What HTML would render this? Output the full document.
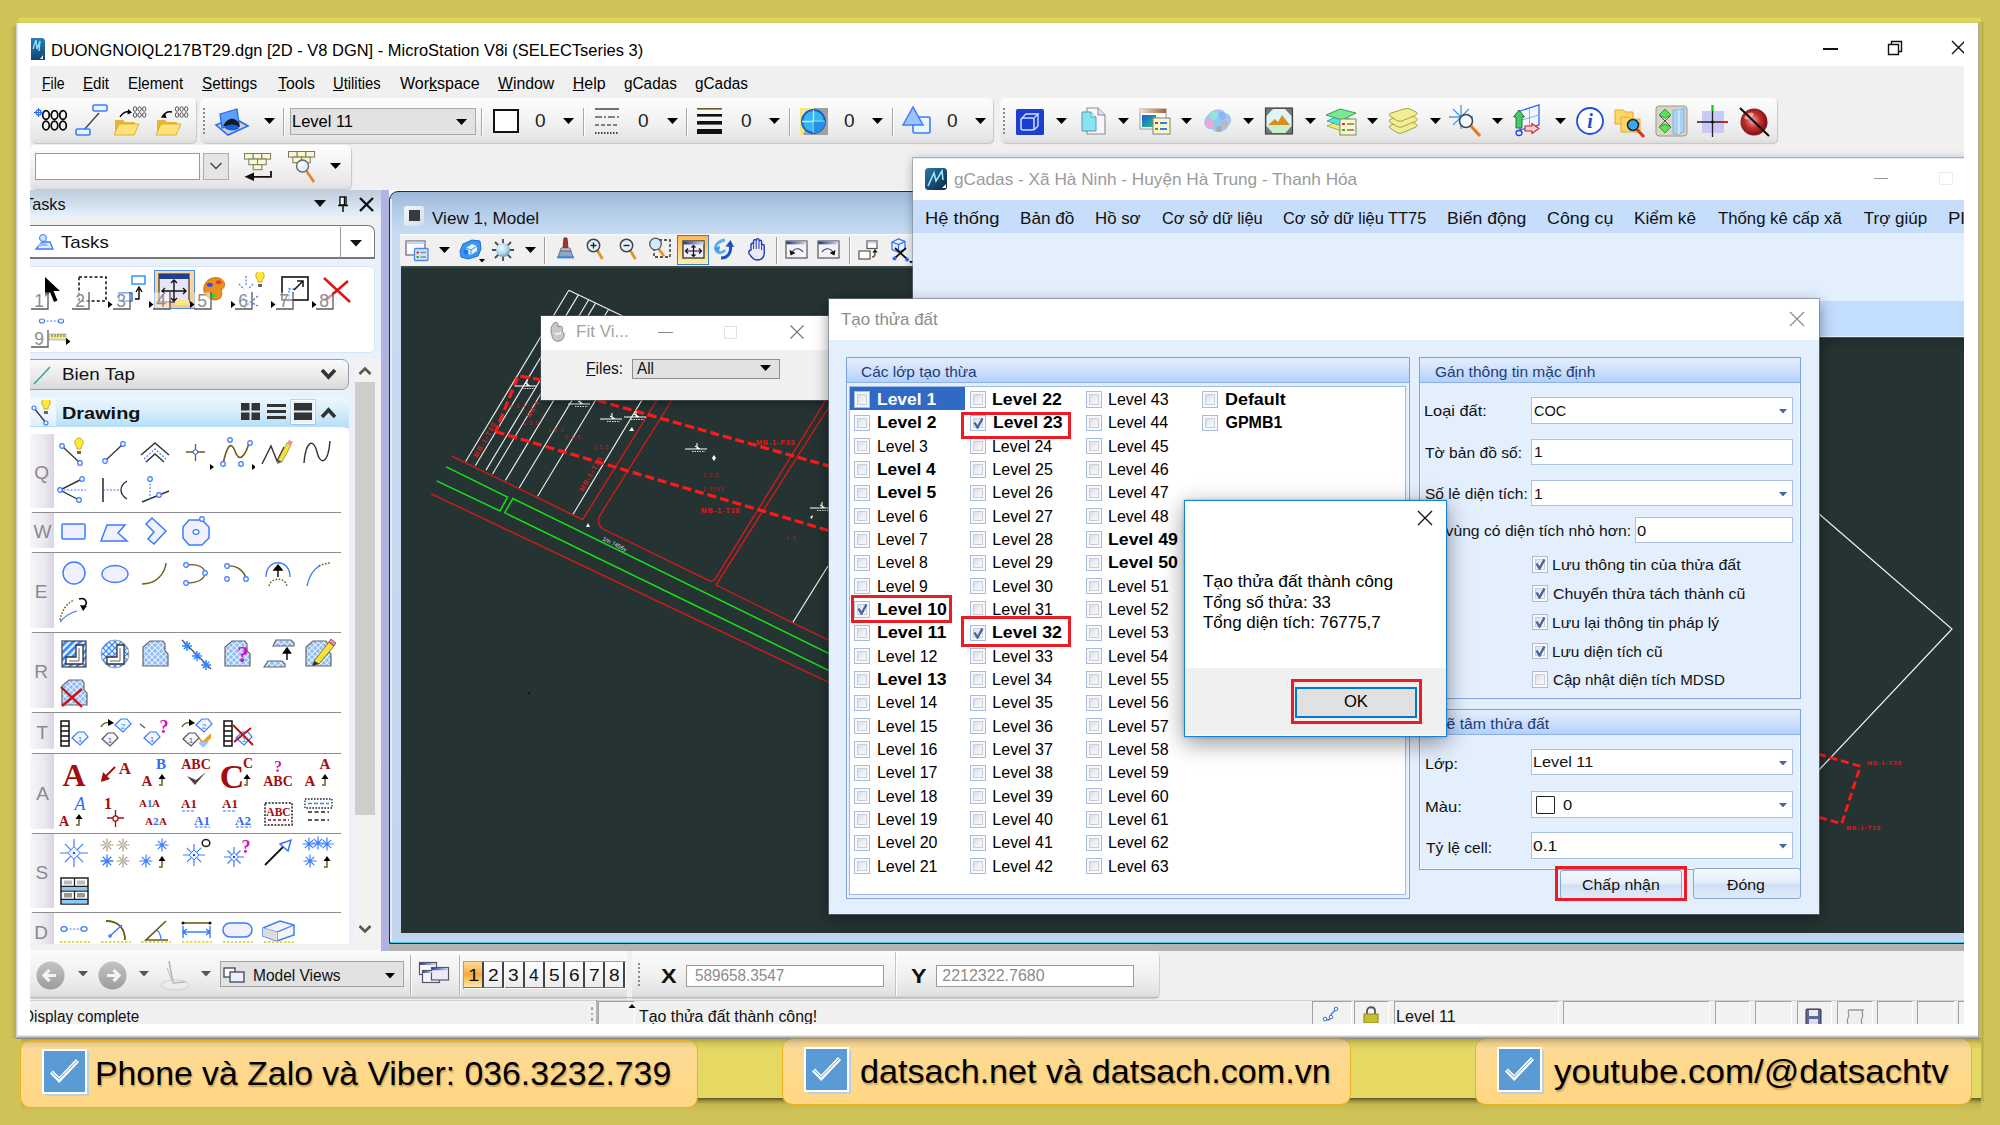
<!DOCTYPE html>
<html><head><meta charset="utf-8"><title>MicroStation</title>
<style>
html,body{margin:0;padding:0;}
body{width:2000px;height:1125px;position:relative;overflow:hidden;background:#cfc257;font-family:"Liberation Sans",sans-serif;}
div,span.t,svg{position:absolute;box-sizing:border-box;}
span.t{white-space:nowrap;transform-origin:0 50%;}
u{text-decoration:underline;}
</style></head><body>
<div style="left:19px;top:16.5px;width:1962px;height:7px;background:linear-gradient(#d2c75a,#e1d762 30%,#dbd05c 70%,#d5ca58);"></div>
<div style="left:1978px;top:22px;width:5.5px;height:1080px;background:linear-gradient(90deg,#c9be54,#c4b950 60%,#b4a94a 80%,#c8bd54);"></div>
<div style="left:8px;top:26px;width:9px;height:1013px;background:linear-gradient(90deg,#cfc55a,#c6bb52 50%,#b3a84a);"></div>
<div style="left:21px;top:1038px;width:1960px;height:60.5px;background:linear-gradient(#a1963f 0px,#b5aa4a 2px,#d4c859 6px,#e5d963 12px,#e5d963 100%);"></div>
<div style="left:21px;top:1098px;width:1960px;height:14px;background:linear-gradient(#5f5728 0px,#9d913c 3px,#c0b54f 6px,#cabe55 10px,#cfc257 14px);"></div>
<div style="left:16.25px;top:22.75px;width:1962.25px;height:1015.75px;background:#fff;"></div>
<div style="left:16.25px;top:1035px;width:1962.25px;height:3.5px;background:linear-gradient(#fdfdfd,#bcbcbc 45%,#7e7e7c);"></div>
<div style="left:16.25px;top:22.75px;width:1.5px;height:1014px;background:linear-gradient(90deg,#c4c4cc,#f4f4f6);"></div>
<div style="left:1977.8px;top:22.75px;width:1.2px;height:1015px;background:linear-gradient(90deg,#c8c8cc,#8f8850);"></div>
<div style="left:30px;top:33px;width:1934px;height:991px;overflow:hidden;background:#fff"><div style="left:-30px;top:-33px;width:2000px;height:1125px">
<svg style="left:30px;top:37px;" width="16" height="24" viewBox="0 0 16 24"><defs><linearGradient id="ai" x1="0" y1="0" x2="0" y2="1"><stop offset="0" stop-color="#2d7fae"/><stop offset="1" stop-color="#0d4470"/></linearGradient></defs><path d="M1 1H13L15 3V23H1Z" fill="url(#ai)"/><path d="M3 12L6 3L7 12L10 4L9 14" stroke="#8fe0ff" stroke-width="1.4" fill="none"/><path d="M10 22L13 18V22Z" fill="#e8f4ff"/></svg>
<span class="t" style="left:50.79px;top:38.5px;font-size:17px;line-height:23px;color:#000;transform:scaleX(0.9688);">DUONGNOIQL217BT29.dgn [2D - V8 DGN] - MicroStation V8i (SELECTseries 3)</span>
<div style="left:1823px;top:48px;width:15px;height:1.5px;background:#111;"></div>
<svg style="left:1887px;top:40px;" width="16" height="16" viewBox="0 0 16 16"><path d="M1.5 4.5H11.5V14.5H1.5Z M4.5 4.5V1.5H14.5V11.5H11.5" fill="none" stroke="#111" stroke-width="1.4"/></svg>
<svg style="left:1950px;top:40px;" width="14" height="16" viewBox="0 0 14 16"><path d="M2 1L15 14M2 14L15 1" stroke="#111" stroke-width="1.4" fill="none"/></svg>
<div style="left:30px;top:66px;width:1934px;height:124px;background:#f0f0f0;"></div>
<span class="t" style="left:41.91px;top:73.0px;font-size:16px;line-height:22px;color:#000;transform:scaleX(0.8750);"><u>F</u>ile</span>
<span class="t" style="left:82.82px;top:73.0px;font-size:16px;line-height:22px;color:#000;transform:scaleX(0.9434);"><u>E</u>dit</span>
<span class="t" style="left:127.83px;top:73.0px;font-size:16px;line-height:22px;color:#000;transform:scaleX(0.9391);">E<u>l</u>ement</span>
<span class="t" style="left:202.28px;top:73.0px;font-size:16px;line-height:22px;color:#000;transform:scaleX(0.9558);"><u>S</u>ettings</span>
<span class="t" style="left:277.75px;top:73.0px;font-size:16px;line-height:22px;color:#000;transform:scaleX(0.9863);"><u>T</u>ools</span>
<span class="t" style="left:332.84px;top:73.0px;font-size:16px;line-height:22px;color:#000;transform:scaleX(0.9246);"><u>U</u>tilities</span>
<span class="t" style="left:400.00px;top:73.0px;font-size:16px;line-height:22px;color:#000;transform:scaleX(1.0000);">Wor<u>k</u>space</span>
<span class="t" style="left:498.00px;top:73.0px;font-size:16px;line-height:22px;color:#000;transform:scaleX(0.9868);"><u>W</u>indow</span>
<span class="t" style="left:572.75px;top:73.0px;font-size:16px;line-height:22px;color:#000;transform:scaleX(1.0000);"><u>H</u>elp</span>
<span class="t" style="left:623.52px;top:73.0px;font-size:16px;line-height:22px;color:#000;transform:scaleX(0.9585);">gCadas</span>
<span class="t" style="left:694.52px;top:73.0px;font-size:16px;line-height:22px;color:#000;transform:scaleX(0.9585);">gCadas</span>
<div style="left:30px;top:98px;width:166px;height:45px;background:linear-gradient(#fdfdfd,#f4f4f4 45%,#e6e6e6 90%,#dcdcdc);border-radius:5px;box-shadow:1px 1px 1px rgba(0,0,0,.18);"></div>
<div style="left:200px;top:98px;width:793px;height:45px;background:linear-gradient(#fdfdfd,#f4f4f4 45%,#e6e6e6 90%,#dcdcdc);border-radius:5px;box-shadow:1px 1px 1px rgba(0,0,0,.18);"></div>
<div style="left:1000px;top:98px;width:777px;height:45px;background:linear-gradient(#fdfdfd,#f4f4f4 45%,#e6e6e6 90%,#dcdcdc);border-radius:5px;box-shadow:1px 1px 1px rgba(0,0,0,.18);"></div>
<svg style="left:34px;top:108px;" width="36" height="26" viewBox="0 0 36 26"><ellipse cx="12.0" cy="7.0" rx="3.3" ry="4.4" fill="none" stroke="#000" stroke-width="1.7"/><ellipse cx="20.5" cy="7.0" rx="3.3" ry="4.4" fill="none" stroke="#000" stroke-width="1.7"/><ellipse cx="29.0" cy="7.0" rx="3.3" ry="4.4" fill="none" stroke="#000" stroke-width="1.7"/><ellipse cx="12.0" cy="17.5" rx="3.3" ry="4.4" fill="none" stroke="#000" stroke-width="1.7"/><ellipse cx="20.5" cy="17.5" rx="3.3" ry="4.4" fill="none" stroke="#000" stroke-width="1.7"/><ellipse cx="29.0" cy="17.5" rx="3.3" ry="4.4" fill="none" stroke="#000" stroke-width="1.7"/><circle cx="4.5" cy="4.5" r="2.6" fill="#fff" stroke="#2a6cf0" stroke-width="1.3"/><path d="M4.5 0V9M0 4.500H9" stroke="#2a6cf0" stroke-width="1.1"/></svg>
<svg style="left:74px;top:103px;" width="36" height="34" viewBox="0 0 36 34"><path d="M9 28L25 10" stroke="#444" stroke-width="1.4"/><rect x="19" y="2" width="14" height="6" rx="1.5" fill="#eaf2ff" stroke="#3b7cff" stroke-width="1.6"/><rect x="2" y="26" width="14" height="6" rx="1.5" fill="#eaf2ff" stroke="#3b7cff" stroke-width="1.6"/></svg>
<svg style="left:112px;top:105px;" width="40" height="32" viewBox="0 0 40 32"><path d="M3 30V15H11L13 17H23V30Z" fill="#e8b73a"/><path d="M2 30L7 19H27L22 30Z" fill="#ffe27a" stroke="#d9a521" stroke-width="0.8"/><path d="M8 12C11 7 14 6 18 7" stroke="#000" stroke-width="1.4" fill="none"/><path d="M16 4L20 7.5L15.5 9.5Z" fill="#000"/><ellipse cx="23.0" cy="4" rx="1.7" ry="2.3" fill="none" stroke="#444" stroke-width="0.9"/><ellipse cx="27.6" cy="4" rx="1.7" ry="2.3" fill="none" stroke="#444" stroke-width="0.9"/><ellipse cx="32.2" cy="4" rx="1.7" ry="2.3" fill="none" stroke="#444" stroke-width="0.9"/><ellipse cx="23.0" cy="10" rx="1.7" ry="2.3" fill="none" stroke="#444" stroke-width="0.9"/><ellipse cx="27.6" cy="10" rx="1.7" ry="2.3" fill="none" stroke="#444" stroke-width="0.9"/><ellipse cx="32.2" cy="10" rx="1.7" ry="2.3" fill="none" stroke="#444" stroke-width="0.9"/></svg>
<svg style="left:154px;top:105px;" width="40" height="32" viewBox="0 0 40 32"><path d="M3 30V15H11L13 17H23V30Z" fill="#e8b73a"/><path d="M2 30L7 19H27L22 30Z" fill="#ffe27a" stroke="#d9a521" stroke-width="0.8"/><path d="M8 12C11 7 14 6 18 7" stroke="#000" stroke-width="1.4" fill="none"/><path d="M11 8L7 12.5L12.5 13Z" fill="#000"/><ellipse cx="23.0" cy="4" rx="1.7" ry="2.3" fill="none" stroke="#444" stroke-width="0.9"/><ellipse cx="27.6" cy="4" rx="1.7" ry="2.3" fill="none" stroke="#444" stroke-width="0.9"/><ellipse cx="32.2" cy="4" rx="1.7" ry="2.3" fill="none" stroke="#444" stroke-width="0.9"/><ellipse cx="23.0" cy="10" rx="1.7" ry="2.3" fill="none" stroke="#444" stroke-width="0.9"/><ellipse cx="27.6" cy="10" rx="1.7" ry="2.3" fill="none" stroke="#444" stroke-width="0.9"/><ellipse cx="32.2" cy="10" rx="1.7" ry="2.3" fill="none" stroke="#444" stroke-width="0.9"/></svg>
<div style="left:203px;top:108px;width:2px;height:2px;background:#8a8a8a;"></div>
<div style="left:203px;top:112px;width:2px;height:2px;background:#8a8a8a;"></div>
<div style="left:203px;top:116px;width:2px;height:2px;background:#8a8a8a;"></div>
<div style="left:203px;top:120px;width:2px;height:2px;background:#8a8a8a;"></div>
<div style="left:203px;top:124px;width:2px;height:2px;background:#8a8a8a;"></div>
<div style="left:203px;top:128px;width:2px;height:2px;background:#8a8a8a;"></div>
<div style="left:203px;top:132px;width:2px;height:2px;background:#8a8a8a;"></div>
<svg style="left:214px;top:106px;" width="36" height="32" viewBox="0 0 36 32"><path d="M2 19L20 12L34 20L14 29Z" fill="#d0d0d0" stroke="#2a6cf0" stroke-width="1.6"/><path d="M6 8L23 3L25 18L8 22Z" fill="#5aa0ff" stroke="#2a6cf0" stroke-width="1.3"/><path d="M9 20C13 12 20 10 25 17L26 21Z" fill="#1a1a1a"/><ellipse cx="18" cy="21.5" rx="7" ry="3" fill="#1160e8"/></svg>
<svg style="left:263.5px;top:118.0px;" width="11" height="6" viewBox="0 0 11 6"><path d="M0 0H11L5.5 6Z" fill="#000"/></svg>
<div style="left:283px;top:108px;width:1px;height:28px;background:#a8a8a8;"></div>
<div style="left:284px;top:108px;width:1px;height:28px;background:#fff;"></div>
<div style="left:290px;top:108px;width:186px;height:27px;background:#e2e2e2;border:1px solid #a9a9a9;"></div>
<span class="t" style="left:291.79px;top:110.0px;font-size:17px;line-height:23px;color:#000;transform:scaleX(0.9672);">Level 11</span>
<svg style="left:455.5px;top:119.0px;" width="11" height="6" viewBox="0 0 11 6"><path d="M0 0H11L5.5 6Z" fill="#000"/></svg>
<div style="left:481px;top:108px;width:1px;height:28px;background:#a8a8a8;"></div>
<div style="left:482px;top:108px;width:1px;height:28px;background:#fff;"></div>
<div style="left:493px;top:109px;width:26px;height:24px;background:#fff;border:2px solid #111;"></div>
<span class="t" style="left:534.71px;top:109.0px;font-size:18px;line-height:24px;color:#222;transform:scaleX(1.0588);">0</span>
<span class="t" style="left:637.71px;top:109.0px;font-size:18px;line-height:24px;color:#222;transform:scaleX(1.0588);">0</span>
<span class="t" style="left:740.71px;top:109.0px;font-size:18px;line-height:24px;color:#222;transform:scaleX(1.0588);">0</span>
<span class="t" style="left:843.71px;top:109.0px;font-size:18px;line-height:24px;color:#222;transform:scaleX(1.0588);">0</span>
<span class="t" style="left:946.71px;top:109.0px;font-size:18px;line-height:24px;color:#222;transform:scaleX(1.0588);">0</span>
<svg style="left:562.5px;top:118.0px;" width="11" height="6" viewBox="0 0 11 6"><path d="M0 0H11L5.5 6Z" fill="#000"/></svg>
<svg style="left:666.5px;top:118.0px;" width="11" height="6" viewBox="0 0 11 6"><path d="M0 0H11L5.5 6Z" fill="#000"/></svg>
<svg style="left:768.5px;top:118.0px;" width="11" height="6" viewBox="0 0 11 6"><path d="M0 0H11L5.5 6Z" fill="#000"/></svg>
<svg style="left:871.5px;top:118.0px;" width="11" height="6" viewBox="0 0 11 6"><path d="M0 0H11L5.5 6Z" fill="#000"/></svg>
<svg style="left:974.5px;top:118.0px;" width="11" height="6" viewBox="0 0 11 6"><path d="M0 0H11L5.5 6Z" fill="#000"/></svg>
<div style="left:583px;top:108px;width:1px;height:28px;background:#a8a8a8;"></div>
<div style="left:584px;top:108px;width:1px;height:28px;background:#fff;"></div>
<div style="left:686px;top:108px;width:1px;height:28px;background:#a8a8a8;"></div>
<div style="left:687px;top:108px;width:1px;height:28px;background:#fff;"></div>
<div style="left:789px;top:108px;width:1px;height:28px;background:#a8a8a8;"></div>
<div style="left:790px;top:108px;width:1px;height:28px;background:#fff;"></div>
<div style="left:892px;top:108px;width:1px;height:28px;background:#a8a8a8;"></div>
<div style="left:893px;top:108px;width:1px;height:28px;background:#fff;"></div>
<svg style="left:593px;top:106px;" width="28" height="30" viewBox="0 0 28 30"><path d="M2 3H26" stroke="#111" stroke-width="1.2"/><path d="M2 11H26" stroke="#111" stroke-width="1.2" stroke-dasharray="7 2 2 2"/><path d="M2 19H26" stroke="#111" stroke-width="1.2" stroke-dasharray="4 2"/><path d="M2 27H26" stroke="#111" stroke-width="1.4" stroke-dasharray="1.5 1.5"/></svg>
<svg style="left:696px;top:106px;" width="28" height="30" viewBox="0 0 28 30"><rect x="1" y="2" width="25" height="1.6" fill="#6b5a2a"/><rect x="1" y="8" width="25" height="2.6" fill="#111"/><rect x="1" y="15" width="25" height="3.6" fill="#111"/><rect x="1" y="23" width="25" height="5" fill="#111"/></svg>
<svg style="left:799px;top:106px;" width="30" height="30" viewBox="0 0 30 30"><rect x="1" y="2" width="28" height="27" fill="#f0e68c"/><path d="M15 2H29V29H4Z" fill="#8a8fa0" opacity=".8"/><circle cx="14.5" cy="15.5" r="11.5" fill="#38b6f0" stroke="#1a5cd8" stroke-width="2"/><path d="M14.5 4V27M3 15.5H26" stroke="#bfeaff" stroke-width="1.3"/><path d="M14.5 15.5H26A11.5 11.5 0 0 1 14.5 27Z" fill="#2a8fe0"/></svg>
<svg style="left:901px;top:105px;" width="32" height="32" viewBox="0 0 32 32"><rect x="12" y="12" width="17" height="16" rx="1.5" fill="#eef4ff" stroke="#3b7cff" stroke-width="1.6"/><path d="M2 20L12 2L22 20Z" fill="#9cc4ff" stroke="#3b7cff" stroke-width="1.5"/></svg>
<div style="left:1003px;top:108px;width:2px;height:2px;background:#8a8a8a;"></div>
<div style="left:1003px;top:112px;width:2px;height:2px;background:#8a8a8a;"></div>
<div style="left:1003px;top:116px;width:2px;height:2px;background:#8a8a8a;"></div>
<div style="left:1003px;top:120px;width:2px;height:2px;background:#8a8a8a;"></div>
<div style="left:1003px;top:124px;width:2px;height:2px;background:#8a8a8a;"></div>
<div style="left:1003px;top:128px;width:2px;height:2px;background:#8a8a8a;"></div>
<div style="left:1003px;top:132px;width:2px;height:2px;background:#8a8a8a;"></div>
<svg style="left:1055.5px;top:118.0px;" width="11" height="6" viewBox="0 0 11 6"><path d="M0 0H11L5.5 6Z" fill="#000"/></svg>
<svg style="left:1118.0px;top:118.0px;" width="11" height="6" viewBox="0 0 11 6"><path d="M0 0H11L5.5 6Z" fill="#000"/></svg>
<svg style="left:1180.5px;top:118.0px;" width="11" height="6" viewBox="0 0 11 6"><path d="M0 0H11L5.5 6Z" fill="#000"/></svg>
<svg style="left:1242.5px;top:118.0px;" width="11" height="6" viewBox="0 0 11 6"><path d="M0 0H11L5.5 6Z" fill="#000"/></svg>
<svg style="left:1304.5px;top:118.0px;" width="11" height="6" viewBox="0 0 11 6"><path d="M0 0H11L5.5 6Z" fill="#000"/></svg>
<svg style="left:1366.5px;top:118.0px;" width="11" height="6" viewBox="0 0 11 6"><path d="M0 0H11L5.5 6Z" fill="#000"/></svg>
<svg style="left:1429.5px;top:118.0px;" width="11" height="6" viewBox="0 0 11 6"><path d="M0 0H11L5.5 6Z" fill="#000"/></svg>
<svg style="left:1491.5px;top:118.0px;" width="11" height="6" viewBox="0 0 11 6"><path d="M0 0H11L5.5 6Z" fill="#000"/></svg>
<svg style="left:1554.5px;top:118.0px;" width="11" height="6" viewBox="0 0 11 6"><path d="M0 0H11L5.5 6Z" fill="#000"/></svg>
<svg style="left:1016px;top:108.5px;" width="28" height="26" viewBox="0 0 28 26"><rect x="0" y="0" width="28" height="26" rx="1.500" fill="#1b3fd2"/><rect x="5" y="9" width="13" height="12" rx="2" fill="none" stroke="#cfe0ff" stroke-width="1.500"/><path d="M6 9L10 5H22L18 9M22 5V17L18 21" fill="none" stroke="#cfe0ff" stroke-width="1.400"/></svg>
<svg style="left:1078px;top:106px;" width="30" height="30" viewBox="0 0 30 30"><path d="M9 2H20L27 9V28H9Z" fill="#f8f6fc" stroke="#8a8a96" stroke-width="1.100"/><path d="M20 2V9H27" fill="#e4e0ec" stroke="#8a8a96" stroke-width="1"/><path d="M4 6H13L18 11V25H4Z" fill="#86e4f2" stroke="#5a9aa8" stroke-width="1"/><path d="M13 6V11H18" fill="#c8f4fa" stroke="#5a9aa8" stroke-width=".800"/></svg>
<svg style="left:1138px;top:107px;" width="34" height="30" viewBox="0 0 34 30"><defs><linearGradient id="wb" x1="0" y1="0" x2="1" y2="0"><stop offset="0" stop-color="#f0e0d0"/><stop offset="1" stop-color="#a8622a"/></linearGradient><linearGradient id="wc" x1="0" y1="0" x2="1" y2="1"><stop offset="0" stop-color="#1a58e8"/><stop offset="1" stop-color="#28c878"/></linearGradient></defs><rect x="2" y="2" width="26" height="20" fill="#fff" stroke="#999" stroke-width="1"/><rect x="2" y="2" width="26" height="4" fill="url(#wb)"/><rect x="4" y="8" width="14" height="12" fill="url(#wc)"/><rect x="15" y="11" width="17" height="16" fill="#fbf6c8" stroke="#8a8a80" stroke-width="1.100"/><path d="M17 16H20" stroke="#e03030" stroke-width="2"/><path d="M17 22H20" stroke="#30b030" stroke-width="2"/><path d="M22 16H29M22 22H29" stroke="#3a7af0" stroke-width="2"/></svg>
<svg style="left:1201px;top:107px;" width="32" height="28" viewBox="0 0 32 28"><path d="M8 7C12 1 22 1 24 6C31 7 32 16 27 19C26 25 14 27 11 22C3 23 0 13 8 7Z" fill="#a8c4ee"/><circle cx="9" cy="17" r="4" fill="#f0a8d0"/><circle cx="14" cy="9" r="4.500" fill="#90e8d8"/><circle cx="21" cy="9" r="4" fill="#88b8f8"/><circle cx="17" cy="16" r="4.500" fill="#90c8f8"/><circle cx="24" cy="17" r="3.500" fill="#b8b8c0"/><circle cx="18" cy="22" r="3" fill="#a8a8b8"/></svg>
<svg style="left:1264px;top:106px;" width="30" height="30" viewBox="0 0 30 30"><rect x="1.500" y="2" width="27" height="26" fill="#777" stroke="#444" stroke-width="1.200"/><path d="M9 3H21L27.500 10V20L21 27H9L2.500 20V10Z" fill="#dff6f8"/><path d="M4 19L11 13L14 16L18 9L26 19Z" fill="#d89018"/><path d="M2.500 19H27.500V20L21 27H9L2.500 20Z" fill="#c8f0c8"/></svg>
<svg style="left:1324px;top:106px;" width="34" height="32" viewBox="0 0 34 32"><path d="M3 20L14 15L30 19L18 25Z" fill="#f0e870" stroke="#a89a30" stroke-width=".800"/><path d="M3 15L14 10L30 14L18 20Z" fill="#58e0e8" stroke="#2a9aa8" stroke-width=".800"/><path d="M2 9L16 3L32 7L18 14Z" fill="#7ae890" stroke="#2a9a48" stroke-width=".900"/><rect x="16" y="13" width="16" height="16" fill="#fbf6c8" stroke="#8a8a80" stroke-width="1.100"/><path d="M18 18H21" stroke="#e03030" stroke-width="2"/><path d="M18 24H21" stroke="#30b030" stroke-width="2"/><path d="M23 18H30M23 24H30" stroke="#777" stroke-width="1.600"/></svg>
<svg style="left:1386px;top:106px;" width="34" height="32" viewBox="0 0 34 32"><g fill="#f2ee96" stroke="#a8a040" stroke-width="1"><path d="M4 22Q2 20 5 19L18 15Q21 14 24 15L30 18Q33 19 30 21L16 27Q13 28 10 26Z"/><path d="M4 16Q2 14 5 13L18 9Q21 8 24 9L30 12Q33 13 30 15L16 21Q13 22 10 20Z"/><path d="M4 10Q2 8 5 7L18 3Q21 2 24 3L30 6Q33 7 30 9L16 15Q13 16 10 14Z"/></g></svg>
<svg style="left:1449px;top:104px;" width="34" height="34" viewBox="0 0 34 34"><path d="M12 1V25M0 13H24M4 5L20 21M20 5L4 21" stroke="#4a9cf0" stroke-width="1.3"/><circle cx="17" cy="17" r="6.5" fill="#f3fbff" stroke="#444" stroke-width="1.6"/><path d="M22 22L31 32" stroke="#e07a1a" stroke-width="3"/></svg>
<svg style="left:1511px;top:102px;" width="34" height="36" viewBox="0 0 34 36"><path d="M9 9L28 3V23L9 28Z" fill="#f4f6ff" stroke="#2a6cf0" stroke-width="1.300"/><path d="M9 18.500L28 13M18.500 6V25.500" stroke="#9ab" stroke-width="1"/><path d="M5 26V15H2.500L8 8L13.500 15H11V26Z" fill="#48c868" stroke="#187838" stroke-width="1"/><path d="M14 24H21V21.500L28 26.500L21 31.500V29H14Z" fill="#f8d0d0" stroke="#c02020" stroke-width="1.100"/><ellipse cx="8" cy="31" rx="3" ry="2.500" fill="#e8eeff" stroke="#2a3cf0" stroke-width="1.300"/></svg>
<svg style="left:1575px;top:106px;" width="30" height="30" viewBox="0 0 30 30"><circle cx="15" cy="15" r="13" fill="#fff" stroke="#1a4fd8" stroke-width="1.8"/><text x="15" y="22" font-family="Liberation Serif" font-style="italic" font-weight="bold" font-size="20" fill="#1a4fd8" text-anchor="middle">i</text></svg>
<svg style="left:1613px;top:105px;" width="34" height="34" viewBox="0 0 34 34"><path d="M2 5H10L12 7H20V19H2Z" fill="#fdd56a" stroke="#eaa820" stroke-width="1"/><path d="M8 12H16L18 14H27V27H8Z" fill="#fdd56a" stroke="#eaa820" stroke-width="1"/><circle cx="20" cy="20" r="5.500" fill="#38a8f4" stroke="#222" stroke-width="1.500"/><path d="M24 24.500L31 32" stroke="#e03018" stroke-width="3"/></svg>
<svg style="left:1655px;top:105px;" width="34" height="32" viewBox="0 0 34 32"><rect x="1" y="1" width="31" height="30" rx="3" fill="#d8d4c8" stroke="#9a988c" stroke-width="1"/><path d="M18 5H24L29 3V27L24 29H18Z" fill="#a8d0f8" stroke="#78a8e0" stroke-width=".800"/><path d="M24 5V29" stroke="#d8ecff" stroke-width="1.500"/><path d="M4 10L10 4L16 10L10 13Z M4 22L10 19L16 22L10 28Z" fill="#58e058" stroke="#1d8a1d" stroke-width=".800"/><path d="M5 11L15 21M15 11L5 21" stroke="#555" stroke-width="1"/></svg>
<svg style="left:1697px;top:104px;" width="32" height="34" viewBox="0 0 32 34"><rect x="5" y="7" width="22" height="22" fill="#c9c9f6"/><path d="M15.500 1V33M0 18H31" stroke="#222" stroke-width="1.300"/><path d="M15.500 1V7" stroke="#1ac01a" stroke-width="2"/><path d="M24 18H31" stroke="#e02020" stroke-width="2"/><rect x="5" y="7" width="22" height="22" fill="#c9c9f6" opacity=".0"/><circle cx="15.500" cy="18" r="1.600" fill="#111"/></svg>
<svg style="left:1737px;top:105px;" width="34" height="34" viewBox="0 0 34 34"><defs><radialGradient id="rb" cx=".45" cy=".45" r=".6"><stop offset="0" stop-color="#f0b0b0"/><stop offset=".45" stop-color="#c83030"/><stop offset="1" stop-color="#6a0c0c"/></radialGradient></defs><circle cx="17" cy="17" r="13.500" fill="url(#rb)"/><ellipse cx="12" cy="11" rx="5" ry="3" fill="#fff" opacity=".55" transform="rotate(-30 12 11)"/><path d="M3 3L32 31" stroke="#111" stroke-width="2.200"/></svg>
<div style="left:30px;top:145px;width:321px;height:44px;background:linear-gradient(#fdfdfd,#f4f4f4 45%,#e6e6e6 90%,#dcdcdc);border-radius:5px;box-shadow:1px 1px 1px rgba(0,0,0,.18);"></div>
<div style="left:35px;top:153px;width:165px;height:27px;background:#fff;border:1px solid #9a9a9a;"></div>
<div style="left:203px;top:153px;width:26px;height:27px;background:#e4e4e4;border:1px solid #adadad;"></div>
<svg style="left:209px;top:161px;" width="14" height="10" viewBox="0 0 14 10"><path d="M1.5 2L7 7.5L12.5 2" fill="none" stroke="#444" stroke-width="1.4"/></svg>
<svg style="left:244px;top:153px;" width="32" height="30" viewBox="0 0 32 30"><g fill="#fbf8cc" stroke="#77776c" stroke-width="1"><rect x="0.500" y="0.500" width="8.700" height="5.600"/><rect x="9.200" y="0.500" width="8.700" height="5.600"/><rect x="17.900" y="0.500" width="8.700" height="5.600"/><rect x="4.800" y="6.100" width="8.700" height="5.600"/><rect x="13.500" y="6.100" width="8.700" height="5.600"/><rect x="9.200" y="11.700" width="8.700" height="5.000"/></g><path d="M27 18V23.800H8" fill="none" stroke="#111" stroke-width="1.800"/><path d="M0.500 23.800L10 19.500V28Z" fill="#111"/></svg>
<svg style="left:288px;top:150.5px;" width="32" height="34" viewBox="0 0 32 34"><g fill="#fbf8cc" stroke="#77776c" stroke-width="1"><rect x="0.500" y="0.500" width="8.700" height="5.600"/><rect x="9.200" y="0.500" width="8.700" height="5.600"/><rect x="17.900" y="0.500" width="8.700" height="5.600"/><rect x="4.800" y="6.100" width="8.700" height="5.600"/><rect x="13.500" y="6.100" width="8.700" height="5.600"/><rect x="9.200" y="11.700" width="8.700" height="5.000"/></g><path d="M18.500 20L26 31" stroke="#e8842a" stroke-width="2.800"/><circle cx="14.500" cy="15" r="6" fill="#e4f2ff" stroke="#666" stroke-width="1.300"/><ellipse cx="13" cy="13" rx="3" ry="2" fill="#fff" opacity=".8"/></svg>
<svg style="left:329.5px;top:163.0px;" width="11" height="6" viewBox="0 0 11 6"><path d="M0 0H11L5.5 6Z" fill="#000"/></svg>
<div style="left:30px;top:190px;width:350.5px;height:28px;background:linear-gradient(#c0cddb,#cbd9e8 35%,#dbe8f5 70%,#e7f2fd);"></div>
<div style="left:30px;top:218px;width:350.5px;height:731.5px;background:#e9f2fc;"></div>
<div style="left:30px;top:218px;width:350.5px;height:8px;background:#f0f0f0;"></div>
<span class="t" style="left:23.56px;top:192.5px;font-size:17px;line-height:23px;color:#111;transform:scaleX(0.9591);">Tasks</span>
<svg style="left:314px;top:200px;" width="12" height="8" viewBox="0 0 12 8"><path d="M0 0H12L6 7Z" fill="#111"/></svg>
<svg style="left:337px;top:196px;" width="12" height="17" viewBox="0 0 12 17"><path d="M3 1H9V9H3Z" fill="#fff" stroke="#111" stroke-width="1.4"/><path d="M7.5 1V9M1 9.500H11M6 10V16" stroke="#111" stroke-width="1.5"/></svg>
<svg style="left:358px;top:196px;" width="17" height="17" viewBox="0 0 17 17"><path d="M2 2L15 15M15 2L2 15" stroke="#111" stroke-width="2.4"/></svg>
<div style="left:380.5px;top:190px;width:8.5px;height:760.7px;background:linear-gradient(90deg,#b1b2e1,#afb4e3);"></div>
<div style="left:22px;top:225px;width:353px;height:34px;background:#fff;border:1.5px solid #777;border-radius:7px 7px 0 0;border-bottom:2px solid #777;"></div>
<div style="left:340px;top:227px;width:1px;height:31px;background:#999;"></div>
<svg style="left:350px;top:240px;" width="12" height="7" viewBox="0 0 12 7"><path d="M0 0H12L6 6.500Z" fill="#111"/></svg>
<svg style="left:33px;top:232px;" width="22" height="20" viewBox="0 0 22 20"><path d="M3 17L9 10H17L20 17Z" fill="#dfeaff" stroke="#3b7cff" stroke-width="1.3"/><circle cx="10" cy="6" r="3.500" fill="#cfe0ff" stroke="#3b7cff" stroke-width="1"/><path d="M5 14C6 10 14 10 15 14Z" fill="#9cbcf8"/></svg>
<span class="t" style="left:60.73px;top:230.5px;font-size:17px;line-height:23px;color:#111;transform:scaleX(1.0994);letter-spacing:0;">Tasks</span>
<div style="left:24px;top:266px;width:351px;height:87px;background:#fff;border:1px solid #d5e6f7;border-radius:6px;"></div>
<div style="left:154px;top:270px;width:41px;height:39px;background:linear-gradient(#fbd9a5,#f9c98a);border:1px solid #4a90e8;"></div>
<svg style="left:43px;top:276px;" width="18" height="28" viewBox="0 0 18 28"><path d="M2 1V21L7 16L11 26L14.500 24.500L10.500 15H17Z" fill="#000"/></svg>
<svg style="left:77px;top:275px;" width="32" height="28" viewBox="0 0 32 28"><rect x="2" y="2" width="27" height="24" fill="none" stroke="#111" stroke-width="1.5" stroke-dasharray="3 2.2"/></svg>
<svg style="left:118px;top:274px;" width="34" height="34" viewBox="0 0 34 34"><rect x="14" y="2" width="13" height="8" fill="#fff" stroke="#3b9cff" stroke-width="1.6"/><rect x="1" y="19" width="13" height="8" fill="#fff" stroke="#3b7cff" stroke-width="1.6"/><path d="M17 25H21V15M18 18L21 13L24 18" fill="none" stroke="#000" stroke-width="1.4"/></svg>
<svg style="left:158px;top:273px;" width="36" height="34" viewBox="0 0 36 34"><rect x="1" y="1" width="30" height="28" fill="#e8e4f8" stroke="#333" stroke-width="1.2"/><rect x="1" y="1" width="30" height="5" fill="#1f3f8f"/><rect x="17" y="27" width="14" height="5" fill="#f5e88a"/><path d="M4 18H28M16 7V28M7 15L4 18L7 21M25 15L28 18L25 21M13 10L16 7L19 10M13 25L16 28L19 25" fill="none" stroke="#111" stroke-width="1.4"/></svg>
<svg style="left:201px;top:276px;" width="30" height="34" viewBox="0 0 30 34"><g transform="scale(.88)"><path d="M14 2C25 0 30 10 25 14C21 17 26 20 22 25C17 30 4 26 3 16C3 8 8 3 14 2Z" fill="#e8901a" stroke="#a8600a" stroke-width=".8"/><ellipse cx="10" cy="10" rx="3.500" ry="2.300" fill="#3a4af0"/><ellipse cx="20" cy="7" rx="3" ry="2.300" fill="#f03030"/><ellipse cx="13" cy="22" rx="3.500" ry="2.500" fill="#30d040"/></g></svg>
<svg style="left:236px;top:272px;" width="36" height="38" viewBox="0 0 36 38"><path d="M10 4V14M3 12L8 17M17 12L12 17" stroke="#3b7cff" stroke-width="1.2" stroke-dasharray="2 1.4"/><path d="M6 26L22 34M22 24L8 36" stroke="#3b7cff" stroke-width="1.3" stroke-dasharray="2.4 1.6"/><path d="M20 5a4.2 4.6 0 1 1 8 0c-1 2 -2 3 -2 5h-4c0-2 -1-3 -2-5z" fill="#ffe83a" stroke="#b89a10" stroke-width=".8"/><rect x="22" y="12" width="4" height="3" fill="#666"/></svg>
<svg style="left:279px;top:275px;" width="32" height="30" viewBox="0 0 32 30"><rect x="3" y="2" width="26" height="23" fill="#fff" stroke="#111" stroke-width="1.6"/><path d="M10 25V14H17" fill="none" stroke="#3b7cff" stroke-width="1.4" stroke-dasharray="2 1.6"/><path d="M15 15L24 6M18 6H24V12" fill="none" stroke="#111" stroke-width="1.5"/></svg>
<svg style="left:320px;top:276px;" width="34" height="30" viewBox="0 0 34 30"><path d="M4 2L30 26M28 5L6 24" stroke="#e01010" stroke-width="2.400"/></svg>
<svg style="left:31.0px;top:290.5px;" width="20" height="20" viewBox="0 0 20 20"><rect x="0" y="1.500" width="16.500" height="16.500" fill="#fff" opacity=".5"/><path d="M0 18H17V1" fill="none" stroke="#5a5a5a" stroke-width="1.300"/><text x="8" y="16" font-family="Liberation Sans" font-size="17.500" fill="#8c8c8c" text-anchor="middle">1</text></svg>
<svg style="left:71.75px;top:290.5px;" width="20" height="20" viewBox="0 0 20 20"><rect x="0" y="1.500" width="16.500" height="16.500" fill="#fff" opacity=".5"/><path d="M0 18H17V1" fill="none" stroke="#5a5a5a" stroke-width="1.300"/><text x="8" y="16" font-family="Liberation Sans" font-size="17.500" fill="#8c8c8c" text-anchor="middle">2</text></svg>
<svg style="left:112.5px;top:290.5px;" width="20" height="20" viewBox="0 0 20 20"><rect x="0" y="1.500" width="16.500" height="16.500" fill="#fff" opacity=".5"/><path d="M0 18H17V1" fill="none" stroke="#5a5a5a" stroke-width="1.300"/><text x="8" y="16" font-family="Liberation Sans" font-size="17.500" fill="#8c8c8c" text-anchor="middle">3</text></svg>
<svg style="left:153.25px;top:290.5px;" width="20" height="20" viewBox="0 0 20 20"><rect x="0" y="1.500" width="16.500" height="16.500" fill="#fff" opacity=".5"/><path d="M0 18H17V1" fill="none" stroke="#5a5a5a" stroke-width="1.300"/><text x="8" y="16" font-family="Liberation Sans" font-size="17.500" fill="#8c8c8c" text-anchor="middle">4</text></svg>
<svg style="left:194.0px;top:290.5px;" width="20" height="20" viewBox="0 0 20 20"><rect x="0" y="1.500" width="16.500" height="16.500" fill="#fff" opacity=".5"/><path d="M0 18H17V1" fill="none" stroke="#5a5a5a" stroke-width="1.300"/><text x="8" y="16" font-family="Liberation Sans" font-size="17.500" fill="#8c8c8c" text-anchor="middle">5</text></svg>
<svg style="left:234.75px;top:290.5px;" width="20" height="20" viewBox="0 0 20 20"><rect x="0" y="1.500" width="16.500" height="16.500" fill="#fff" opacity=".5"/><path d="M0 18H17V1" fill="none" stroke="#5a5a5a" stroke-width="1.300"/><text x="8" y="16" font-family="Liberation Sans" font-size="17.500" fill="#8c8c8c" text-anchor="middle">6</text></svg>
<svg style="left:275.5px;top:290.5px;" width="20" height="20" viewBox="0 0 20 20"><rect x="0" y="1.500" width="16.500" height="16.500" fill="#fff" opacity=".5"/><path d="M0 18H17V1" fill="none" stroke="#5a5a5a" stroke-width="1.300"/><text x="8" y="16" font-family="Liberation Sans" font-size="17.500" fill="#8c8c8c" text-anchor="middle">7</text></svg>
<svg style="left:316.25px;top:290.5px;" width="20" height="20" viewBox="0 0 20 20"><rect x="0" y="1.500" width="16.500" height="16.500" fill="#fff" opacity=".5"/><path d="M0 18H17V1" fill="none" stroke="#5a5a5a" stroke-width="1.300"/><text x="8" y="16" font-family="Liberation Sans" font-size="17.500" fill="#8c8c8c" text-anchor="middle">8</text></svg>
<svg style="left:107.5px;top:300.5px;" width="5" height="7" viewBox="0 0 5 7"><path d="M0 0L4.500 3.500L0 7Z" fill="#000"/></svg>
<svg style="left:148.5px;top:300.5px;" width="5" height="7" viewBox="0 0 5 7"><path d="M0 0L4.500 3.500L0 7Z" fill="#000"/></svg>
<svg style="left:189.5px;top:300.5px;" width="5" height="7" viewBox="0 0 5 7"><path d="M0 0L4.500 3.500L0 7Z" fill="#000"/></svg>
<svg style="left:230.5px;top:300.5px;" width="5" height="7" viewBox="0 0 5 7"><path d="M0 0L4.500 3.500L0 7Z" fill="#000"/></svg>
<svg style="left:271px;top:300.5px;" width="5" height="7" viewBox="0 0 5 7"><path d="M0 0L4.500 3.500L0 7Z" fill="#000"/></svg>
<svg style="left:312px;top:300.5px;" width="5" height="7" viewBox="0 0 5 7"><path d="M0 0L4.500 3.500L0 7Z" fill="#000"/></svg>
<svg style="left:38px;top:316px;" width="34" height="10" viewBox="0 0 34 10"><path d="M5 5H21" stroke="#3b7cff" stroke-width="1.2" stroke-dasharray="2 1.600"/><ellipse cx="4" cy="5" rx="2.600" ry="2" fill="#fff" stroke="#3b7cff" stroke-width="1.200"/><ellipse cx="23" cy="5" rx="2.600" ry="2" fill="#fff" stroke="#3b7cff" stroke-width="1.200"/></svg>
<svg style="left:31px;top:328.5px;" width="20" height="20" viewBox="0 0 20 20"><rect x="0" y="1.500" width="16.500" height="16.500" fill="#fff" opacity=".5"/><path d="M0 18H17V1" fill="none" stroke="#5a5a5a" stroke-width="1.300"/><text x="8" y="16" font-family="Liberation Sans" font-size="17.500" fill="#8c8c8c" text-anchor="middle">9</text></svg>
<svg style="left:49px;top:333px;" width="18" height="8" viewBox="0 0 18 8"><rect x="0" y="1" width="17" height="6" fill="#f0e890" stroke="#999" stroke-width=".6"/><path d="M3 1V4M6 1V4M9 1V4M12 1V4M15 1V4" stroke="#555" stroke-width=".8"/></svg>
<svg style="left:66px;top:338px;" width="5" height="7" viewBox="0 0 5 7"><path d="M0 0L4.500 3.500L0 7Z" fill="#000"/></svg>
<div style="left:24px;top:359px;width:325px;height:31px;background:linear-gradient(#fafafa,#ececec 50%,#d9d9d9);border:1px solid #9c9c9c;border-radius:7px;"></div>
<svg style="left:32px;top:364px;" width="20" height="22" viewBox="0 0 20 22"><path d="M2 20L18 3" stroke="#3aa8a0" stroke-width="1.6"/></svg>
<span class="t" style="left:61.61px;top:363.0px;font-size:17px;line-height:23px;color:#111;transform:scaleX(1.1094);">Bien Tap</span>
<svg style="left:320px;top:368px;" width="17" height="13" viewBox="0 0 17 13"><path d="M2 2L8.500 9L15 2" fill="none" stroke="#333" stroke-width="3.600"/></svg>
<div style="left:354px;top:358px;width:26.5px;height:591.5px;background:#f2f2f2;"></div>
<div style="left:355px;top:382px;width:20px;height:433px;background:#cdcdcd;"></div>
<svg style="left:358px;top:366px;" width="14" height="10" viewBox="0 0 14 10"><path d="M1.500 8L7 2.500L12.500 8" fill="none" stroke="#555" stroke-width="2.600"/></svg>
<svg style="left:358px;top:924px;" width="14" height="10" viewBox="0 0 14 10"><path d="M1.500 2L7 7.500L12.500 2" fill="none" stroke="#555" stroke-width="2.600"/></svg>
<div style="left:24px;top:397px;width:325px;height:31px;background:linear-gradient(#eef7fe,#d5ecfb 50%,#b2def8);border-radius:7px 7px 0 0;"></div>
<div style="left:24px;top:427px;width:325px;height:517px;background:#fff;border-radius:0 7px 0 0;"></div>
<div style="left:30px;top:399px;width:26px;height:27px;background:rgba(255,255,255,.55);"></div>
<svg style="left:31px;top:400px;" width="24" height="26" viewBox="0 0 24 26"><path d="M3 8L15 23" stroke="#333" stroke-width="1.300"/><circle cx="3" cy="8" r="2" fill="#f4f4ff" stroke="#3b7cff" stroke-width="1.2"/><circle cx="15" cy="23" r="2" fill="#f4f4ff" stroke="#3b7cff" stroke-width="1.2"/><path d="M11 4a4.2 4.6 0 1 1 8 0c-1 2 -2 3 -2 5h-4c0-2 -1-3 -2-5z" fill="#ffe83a" stroke="#b89a10" stroke-width=".8"/><rect x="13" y="11" width="4" height="3" fill="#666"/></svg>
<span class="t" style="left:61.83px;top:402.0px;font-size:17px;line-height:23px;color:#111;font-weight:bold;transform:scaleX(1.1692);">Drawing</span>
<svg style="left:241px;top:403px;" width="19" height="18" viewBox="0 0 19 18"><rect x="0" y="0" width="8.500" height="7.500" fill="#333"/><rect x="10.500" y="0" width="8.500" height="7.500" fill="#333"/><rect x="0" y="9.500" width="8.500" height="7.500" fill="#333"/><rect x="10.500" y="9.500" width="8.500" height="7.500" fill="#333"/></svg>
<svg style="left:267px;top:404px;" width="19" height="16" viewBox="0 0 19 16"><rect x="0" y="0" width="19" height="3" fill="#333"/><rect x="0" y="6" width="19" height="3" fill="#333"/><rect x="0" y="12" width="19" height="3" fill="#333"/></svg>
<div style="left:291px;top:400px;width:24px;height:24px;background:#e4f2fc;border:1.500px solid #fff;box-shadow:0 0 0 .5px #9ab;"></div>
<svg style="left:294px;top:403px;" width="18" height="18" viewBox="0 0 18 18"><rect x="0" y="0" width="18" height="7.500" fill="#333"/><rect x="0" y="9.500" width="18" height="7.500" fill="#333"/></svg>
<svg style="left:320px;top:406px;" width="17" height="13" viewBox="0 0 17 13"><path d="M2 11L8.500 4L15 11" fill="none" stroke="#333" stroke-width="3.600"/></svg>
<div style="left:30px;top:428px;width:24px;height:516px;background:linear-gradient(90deg,#f7f6fa,#ebe8f0 60%,#d9d5e2);"></div>
<div style="left:30px;top:428px;width:24px;height:6px;background:#fff;"></div>
<div style="left:30px;top:507.5px;width:24px;height:4px;background:#fff;"></div>
<div style="left:32px;top:511.5px;width:309px;height:1.3px;background:#8e8e8e;"></div>
<div style="left:30px;top:548px;width:24px;height:4px;background:#fff;"></div>
<div style="left:32px;top:552px;width:309px;height:1.3px;background:#8e8e8e;"></div>
<div style="left:30px;top:628px;width:24px;height:4px;background:#fff;"></div>
<div style="left:32px;top:632px;width:309px;height:1.3px;background:#8e8e8e;"></div>
<div style="left:30px;top:707.5px;width:24px;height:4px;background:#fff;"></div>
<div style="left:32px;top:711.5px;width:309px;height:1.3px;background:#8e8e8e;"></div>
<div style="left:30px;top:748.5px;width:24px;height:4px;background:#fff;"></div>
<div style="left:32px;top:752.5px;width:309px;height:1.3px;background:#8e8e8e;"></div>
<div style="left:30px;top:828.5px;width:24px;height:4px;background:#fff;"></div>
<div style="left:32px;top:832.5px;width:309px;height:1.3px;background:#8e8e8e;"></div>
<div style="left:30px;top:907.5px;width:24px;height:4px;background:#fff;"></div>
<div style="left:32px;top:911.5px;width:309px;height:1.3px;background:#8e8e8e;"></div>
<span class="t" style="left:34.36px;top:459.5px;font-size:19px;line-height:25px;color:#8a8a8a;">Q</span>
<span class="t" style="left:33.53px;top:519.0px;font-size:19px;line-height:25px;color:#8a8a8a;">W</span>
<span class="t" style="left:34.66px;top:579.0px;font-size:19px;line-height:25px;color:#8a8a8a;">E</span>
<span class="t" style="left:34.14px;top:659.0px;font-size:19px;line-height:25px;color:#8a8a8a;">R</span>
<span class="t" style="left:36.45px;top:719.5px;font-size:19px;line-height:25px;color:#8a8a8a;">T</span>
<span class="t" style="left:36.16px;top:781.0px;font-size:19px;line-height:25px;color:#8a8a8a;">A</span>
<span class="t" style="left:35.41px;top:859.5px;font-size:19px;line-height:25px;color:#8a8a8a;">S</span>
<span class="t" style="left:34.14px;top:919.5px;font-size:19px;line-height:25px;color:#8a8a8a;">D</span>
<svg style="left:56.0px;top:435px" width="36" height="36" viewBox="0 0 36 36"><path d="M6 11L24 28" stroke="#333" stroke-width="1.3"/><circle cx="6" cy="11" r="2.3" fill="#f4f4ff" stroke="#3b7cff" stroke-width="1.2"/><circle cx="24" cy="28" r="2.3" fill="#f4f4ff" stroke="#3b7cff" stroke-width="1.2"/><path d="M19 9a4.2 4.6 0 1 1 8 0c-1 2 -2 3 -2 5h-4c0-2 -1-3 -2-5z" fill="#ffe83a" stroke="#b89a10" stroke-width=".8"/><rect x="21" y="16" width="4" height="3" fill="#666"/></svg>
<svg style="left:96.7px;top:435px" width="36" height="36" viewBox="0 0 36 36"><path d="M8 26L26 9" stroke="#333" stroke-width="1.3"/><circle cx="8" cy="26" r="2.3" fill="#f4f4ff" stroke="#3b7cff" stroke-width="1.2"/><circle cx="26" cy="9" r="2.3" fill="#f4f4ff" stroke="#3b7cff" stroke-width="1.2"/></svg>
<svg style="left:137.4px;top:435px" width="36" height="36" viewBox="0 0 36 36"><path d="M4 20L18 8L32 20M9 27L18 19L27 27" fill="none" stroke="#333" stroke-width="1.5"/><path d="M7 24L18 14L29 24" fill="none" stroke="#3b7cff" stroke-width="1.1" stroke-dasharray="2 1.5"/></svg>
<svg style="left:178.1px;top:435px" width="36" height="36" viewBox="0 0 36 36"><path d="M8 17H27M17.5 9V26" stroke="#6e5c1c" stroke-width="1.3"/><circle cx="17.5" cy="17" r="2.2" fill="#fff" stroke="#3b7cff" stroke-width="1.1"/><path d="M32 29L36 32L32 35Z" fill="#000"/></svg>
<svg style="left:218.8px;top:435px" width="36" height="36" viewBox="0 0 36 36"><path d="M4 29C8 10 12 6 16 16C20 28 26 22 30 8" fill="none" stroke="#6e5c1c" stroke-width="1.6"/><circle cx="4" cy="29" r="2.3" fill="#f4f4ff" stroke="#3b7cff" stroke-width="1.2"/><circle cx="11" cy="5" r="2.3" fill="#f4f4ff" stroke="#3b7cff" stroke-width="1.2"/><circle cx="22" cy="29" r="2.3" fill="#f4f4ff" stroke="#3b7cff" stroke-width="1.2"/><circle cx="31" cy="8" r="2.3" fill="#f4f4ff" stroke="#3b7cff" stroke-width="1.2"/><path d="M33 29L37 32L33 35Z" fill="#000"/></svg>
<svg style="left:259.5px;top:435px" width="36" height="36" viewBox="0 0 36 36"><path d="M2 29L11 11L17 26L24 12" fill="none" stroke="#333" stroke-width="1.4"/><path d="M18 25L27 8L31 10L22 27Z" fill="#f5e23a" stroke="#8a7a20" stroke-width=".7"/><path d="M27 8L29 5L33 7L31 10Z" fill="#f08ab0"/><path d="M18 25L22 27L17 29Z" fill="#555"/></svg>
<svg style="left:300.2px;top:435px" width="36" height="36" viewBox="0 0 36 36"><path d="M4 28C6 4 14 4 17 17C20 30 28 30 30 6" fill="none" stroke="#333" stroke-width="1.4"/></svg>
<svg style="left:56.0px;top:473px" width="36" height="36" viewBox="0 0 36 36"><path d="M26 6L4 17L23 27" fill="none" stroke="#333" stroke-width="1.4"/><path d="M4 17H30" stroke="#3b7cff" stroke-width="1.1" stroke-dasharray="2 1.5"/><circle cx="26" cy="6" r="2.3" fill="#f4f4ff" stroke="#3b7cff" stroke-width="1.2"/><circle cx="4" cy="17" r="2.3" fill="#f4f4ff" stroke="#3b7cff" stroke-width="1.2"/><circle cx="23" cy="27" r="2.3" fill="#f4f4ff" stroke="#3b7cff" stroke-width="1.2"/></svg>
<svg style="left:96.7px;top:473px" width="36" height="36" viewBox="0 0 36 36"><path d="M6 5V29" stroke="#333" stroke-width="1.6"/><path d="M6 17H24" stroke="#3b7cff" stroke-width="1.1" stroke-dasharray="2 1.5"/><path d="M30 8C22 13 22 21 30 26" fill="none" stroke="#333" stroke-width="1.4"/></svg>
<svg style="left:137.4px;top:473px" width="36" height="36" viewBox="0 0 36 36"><path d="M5 29L32 18" stroke="#333" stroke-width="1.4"/><path d="M13 7V26" stroke="#3b7cff" stroke-width="1.1" stroke-dasharray="2 1.5"/><circle cx="13" cy="6" r="2.3" fill="#f4f4ff" stroke="#3b7cff" stroke-width="1.2"/><circle cx="22" cy="22" r="2.3" fill="#f4f4ff" stroke="#3b7cff" stroke-width="1.2"/></svg>
<svg style="left:56.0px;top:514px" width="36" height="36" viewBox="0 0 36 36"><rect x="6" y="10" width="23" height="15" rx="1" fill="#f1f0ff" stroke="#3b7cff" stroke-width="1.5"/></svg>
<svg style="left:96.7px;top:514px" width="36" height="36" viewBox="0 0 36 36"><path d="M4 27L10 11H28L21 19L30 27Z" fill="#f1f0ff" stroke="#3b7cff" stroke-width="1.5"/></svg>
<svg style="left:137.4px;top:514px" width="36" height="36" viewBox="0 0 36 36"><path d="M9 10L15 4L29 17L17 30L11 25L17 18Z" fill="#f1f0ff" stroke="#3b7cff" stroke-width="1.5"/></svg>
<svg style="left:178.1px;top:514px" width="36" height="36" viewBox="0 0 36 36"><path d="M11 6H24L31 13V24L24 31H11L5 24V13Z" fill="#f1f0ff" stroke="#3b7cff" stroke-width="1.5"/><ellipse cx="18" cy="18" rx="3" ry="2.3" fill="#fff" stroke="#3b7cff" stroke-width="1.2"/><circle cx="24" cy="5" r="2.3" fill="#f4f4ff" stroke="#3b7cff" stroke-width="1.2"/></svg>
<svg style="left:56.0px;top:555px" width="36" height="36" viewBox="0 0 36 36"><circle cx="18" cy="18" r="11" fill="#f1f0ff" stroke="#3b7cff" stroke-width="1.4"/></svg>
<svg style="left:96.7px;top:555px" width="36" height="36" viewBox="0 0 36 36"><ellipse cx="18" cy="19" rx="13" ry="8.5" fill="#f1f0ff" stroke="#3b7cff" stroke-width="1.4"/></svg>
<svg style="left:137.4px;top:555px" width="36" height="36" viewBox="0 0 36 36"><path d="M5 29C20 29 28 18 29 8" fill="none" stroke="#6e5c1c" stroke-width="1.5"/></svg>
<svg style="left:178.1px;top:555px" width="36" height="36" viewBox="0 0 36 36"><path d="M8 10C22 8 27 14 27 18C27 24 20 28 8 28" fill="none" stroke="#6e5c1c" stroke-width="1.4"/><circle cx="8" cy="10" r="2.3" fill="#f4f4ff" stroke="#3b7cff" stroke-width="1.2"/><circle cx="27" cy="18" r="2.3" fill="#f4f4ff" stroke="#3b7cff" stroke-width="1.2"/><circle cx="8" cy="28" r="2.3" fill="#f4f4ff" stroke="#3b7cff" stroke-width="1.2"/></svg>
<svg style="left:218.8px;top:555px" width="36" height="36" viewBox="0 0 36 36"><path d="M8 11C20 10 26 18 27 24" fill="none" stroke="#6e5c1c" stroke-width="1.4"/><circle cx="8" cy="11" r="2.3" fill="#f4f4ff" stroke="#3b7cff" stroke-width="1.2"/><circle cx="8" cy="24" r="2.3" fill="#f4f4ff" stroke="#3b7cff" stroke-width="1.2"/><circle cx="27" cy="24" r="2.3" fill="#f4f4ff" stroke="#3b7cff" stroke-width="1.2"/></svg>
<svg style="left:259.5px;top:555px" width="36" height="36" viewBox="0 0 36 36"><path d="M6 22C6 3 30 3 30 22" fill="none" stroke="#3b7cff" stroke-width="1.3"/><path d="M9 31C11 22 25 22 27 31" fill="none" stroke="#6e5c1c" stroke-width="1.4" stroke-dasharray="1.6 1.6"/><path d="M18 22V13M14 15L18 10L22 15Z" stroke="#000" stroke-width="1.4" fill="#000"/></svg>
<svg style="left:300.2px;top:555px" width="36" height="36" viewBox="0 0 36 36"><path d="M7 31C9 21 13 15 19 11" fill="none" stroke="#3b7cff" stroke-width="1.3"/><path d="M19 11C23 9 27 8 31 8" fill="none" stroke="#6e5c1c" stroke-width="1.5" stroke-dasharray="1.6 1.6"/></svg>
<svg style="left:56.0px;top:593px" width="36" height="36" viewBox="0 0 36 36"><path d="M4 29C8 24 14 20 21 18" fill="none" stroke="#3b7cff" stroke-width="1.3"/><path d="M4 27C6 17 11 10 18 7" fill="none" stroke="#6e5c1c" stroke-width="1.5" stroke-dasharray="1.6 1.6"/><path d="M23 6C30 4 33 11 27 14" fill="none" stroke="#000" stroke-width="1.5"/><path d="M24 12L31 13L27 18Z" fill="#000"/></svg>
<svg style="left:56.0px;top:636px" width="36" height="36" viewBox="0 0 36 36"><defs><pattern id="h1" width="5" height="5" patternUnits="userSpaceOnUse" patternTransform="rotate(-45)"><rect width="5" height="5" fill="#e8f2ff"/><rect width="5" height="2.6" fill="#2f86ff"/></pattern></defs><rect x="6" y="5" width="24" height="26" fill="url(#h1)" stroke="#444" stroke-width="1.2"/><path d="M20 9H27V28H10V21H20Z" fill="#fff" stroke="#333" stroke-width="1.3"/><path d="M23 12V25H13" stroke="#666" stroke-width="1" fill="none"/></svg>
<svg style="left:96.7px;top:636px" width="36" height="36" viewBox="0 0 36 36"><defs><pattern id="h2" width="6" height="6" patternUnits="userSpaceOnUse"><rect width="6" height="6" fill="#e8f2ff"/><path d="M0 0L6 6M6 0L0 6" stroke="#2f86ff" stroke-width="1.2"/></pattern></defs><circle cx="18" cy="18" r="14" fill="url(#h2)" stroke="#999" stroke-width=".8"/><path d="M20 9H27V28H10V21H20Z" fill="#fff" stroke="#333" stroke-width="1.3"/><path d="M23 12V25H13" stroke="#666" stroke-width="1" fill="none"/></svg>
<svg style="left:137.4px;top:636px" width="36" height="36" viewBox="0 0 36 36"><defs><pattern id="h3" width="6" height="6" patternUnits="userSpaceOnUse"><rect width="6" height="6" fill="#8dbcf9"/><path d="M0 0L6 6M6 0L0 6" stroke="#e4f0ff" stroke-width="1.2"/></pattern></defs><path d="M6 30V11L13 5H26L28 8V15L31 18V30Z" fill="url(#h3)" stroke="#666" stroke-width="1.2"/></svg>
<svg style="left:178.1px;top:636px" width="36" height="36" viewBox="0 0 36 36"><path d="M4 4L33 33" stroke="#444" stroke-width="1.1"/><path d="M4 10H14M9 5V15M5.8 6.8L12.2 13.2M12.2 6.8L5.8 13.2" stroke="#2f86ff" stroke-width="1.5"/><path d="M14 20H24M19 15V25M15.8 16.8L22.2 23.2M22.2 16.8L15.8 23.2" stroke="#2f86ff" stroke-width="1.5"/><path d="M23 29H33M28 24V34M24.8 25.8L31.2 32.2M31.2 25.8L24.8 32.2" stroke="#2f86ff" stroke-width="1.5"/></svg>
<svg style="left:218.8px;top:636px" width="36" height="36" viewBox="0 0 36 36"><defs><pattern id="h5" width="6" height="6" patternUnits="userSpaceOnUse"><rect width="6" height="6" fill="#8dbcf9"/><path d="M0 0L6 6M6 0L0 6" stroke="#e4f0ff" stroke-width="1.2"/></pattern></defs><path d="M6 30V11L13 5H26L28 8V15L31 18V30Z" fill="url(#h5)" stroke="#666" stroke-width="1.2"/><text x="18" y="26" font-family="Liberation Serif" font-weight="bold" font-size="24" fill="#d010c0" text-anchor="start" >?</text></svg>
<svg style="left:259.5px;top:636px" width="36" height="36" viewBox="0 0 36 36"><defs><pattern id="h6" width="6" height="6" patternUnits="userSpaceOnUse"><rect width="6" height="6" fill="#8dbcf9"/><path d="M0 0L6 6M6 0L0 6" stroke="#e4f0ff" stroke-width="1.2"/></pattern></defs><path d="M4 31L8 25H22L25 28V31Z" fill="url(#h6)" stroke="#666" stroke-width="1.2"/><defs><pattern id="h6b" width="6" height="6" patternUnits="userSpaceOnUse"><rect width="6" height="6" fill="#8dbcf9"/><path d="M0 0L6 6M6 0L0 6" stroke="#e4f0ff" stroke-width="1.2"/></pattern></defs><path d="M13 10L16 4H31L34 7V10Z" fill="url(#h6b)" stroke="#666" stroke-width="1.2"/><path d="M27 24V15M23.5 17L27 12L30.5 17Z" stroke="#000" stroke-width="1.4" fill="#000"/></svg>
<svg style="left:300.2px;top:636px" width="36" height="36" viewBox="0 0 36 36"><defs><pattern id="h7" width="6" height="6" patternUnits="userSpaceOnUse"><rect width="6" height="6" fill="#8dbcf9"/><path d="M0 0L6 6M6 0L0 6" stroke="#e4f0ff" stroke-width="1.2"/></pattern></defs><path d="M6 30V11L13 5H26L28 8V15L31 18V30Z" fill="url(#h7)" stroke="#666" stroke-width="1.2"/><path d="M14 25L29 6L34 10L19 28Z" fill="#f5e23a" stroke="#6a5a10" stroke-width=".8"/><path d="M29 6L31 3L36 7L34 10Z" fill="#f08ab0" stroke="#333" stroke-width=".6"/><path d="M14 25L19 28L12 30Z" fill="#333"/></svg>
<svg style="left:56.0px;top:675px" width="36" height="36" viewBox="0 0 36 36"><defs><pattern id="h8" width="6" height="6" patternUnits="userSpaceOnUse"><rect width="6" height="6" fill="#8dbcf9"/><path d="M0 0L6 6M6 0L0 6" stroke="#e4f0ff" stroke-width="1.2"/></pattern></defs><path d="M6 30V11L13 5H26L28 8V15L31 18V30Z" fill="url(#h8)" stroke="#666" stroke-width="1.2"/><path d="M5 12L26 32M26 14L6 31" stroke="#d01010" stroke-width="2.4"/></svg>
<svg style="left:56.0px;top:715px" width="36" height="36" viewBox="0 0 36 36"><rect x="5" y="6" width="8" height="25" fill="#fff" stroke="#111" stroke-width="1.5"/><path d="M5 11H13M5 16H13M5 21H13M5 26H13" stroke="#111" stroke-width="1.3"/><path d="M16 23L22 17H28L32 22L24 30Z" fill="#f4f6ff" stroke="#3b7cff" stroke-width="1.2"/><text x="24" y="26.5" font-family="Liberation Sans" font-weight="normal" font-size="8" fill="#3b7cff" text-anchor="middle" >1</text></svg>
<svg style="left:96.7px;top:715px" width="36" height="36" viewBox="0 0 36 36"><path d="M4 12C6 8 9 7 13 8" fill="none" stroke="#6e5c1c" stroke-width="1.4"/><path d="M11 4L17 8L11 11Z" fill="#000"/><path d="M5 24L11 18H17L21 23L13 31Z" fill="#f4f6ff" stroke="#555" stroke-width="1.2"/><text x="13" y="27.5" font-family="Liberation Sans" font-weight="normal" font-size="8" fill="#555" text-anchor="middle" >1</text><path d="M18 10L24 4H30L34 9L26 17Z" fill="#f4f6ff" stroke="#3b7cff" stroke-width="1.2"/><text x="26" y="13.5" font-family="Liberation Sans" font-weight="normal" font-size="8" fill="#3b7cff" text-anchor="middle" >2</text></svg>
<svg style="left:137.4px;top:715px" width="36" height="36" viewBox="0 0 36 36"><path d="M3 9L8 13" stroke="#555" stroke-width="1.2"/><path d="M7 23L13 17H19L23 22L15 30Z" fill="#f4f6ff" stroke="#3b7cff" stroke-width="1.2"/><text x="15" y="26.5" font-family="Liberation Sans" font-weight="normal" font-size="8" fill="#3b7cff" text-anchor="middle" >1</text><text x="27" y="18" font-family="Liberation Serif" font-weight="bold" font-size="18" fill="#d010c0" text-anchor="middle" >?</text></svg>
<svg style="left:178.1px;top:715px" width="36" height="36" viewBox="0 0 36 36"><path d="M4 12C6 8 9 7 13 8" fill="none" stroke="#6e5c1c" stroke-width="1.4"/><path d="M11 4L17 8L11 11Z" fill="#000"/><path d="M18 19L25 26L33 18V23L25 31Z" fill="#e8a020"/><path d="M20 27H31L25 33Z" fill="#9cc4ff"/><path d="M5 24L11 18H17L21 23L13 31Z" fill="#f4f6ff" stroke="#555" stroke-width="1.2"/><text x="13" y="27.5" font-family="Liberation Sans" font-weight="normal" font-size="8" fill="#555" text-anchor="middle" >1</text><path d="M18 10L24 4H30L34 9L26 17Z" fill="#f4f6ff" stroke="#3b7cff" stroke-width="1.2"/><text x="26" y="13.5" font-family="Liberation Sans" font-weight="normal" font-size="8" fill="#3b7cff" text-anchor="middle" >2</text></svg>
<svg style="left:218.8px;top:715px" width="36" height="36" viewBox="0 0 36 36"><rect x="5" y="6" width="8" height="25" fill="#fff" stroke="#111" stroke-width="1.5"/><path d="M5 11H13M5 16H13M5 21H13M5 26H13" stroke="#111" stroke-width="1.3"/><path d="M17 23L23 17H29L33 22L25 30Z" fill="#f4f6ff" stroke="#3b7cff" stroke-width="1.2"/><text x="25" y="26.5" font-family="Liberation Sans" font-weight="normal" font-size="8" fill="#3b7cff" text-anchor="middle" >1</text><path d="M14 10L34 30M32 13L15 27" stroke="#c01010" stroke-width="2"/></svg>
<svg style="left:56.0px;top:755px" width="36" height="36" viewBox="0 0 36 36"><text x="18" y="31" font-family="Liberation Serif" font-weight="bold" font-size="32" fill="#a30d0d" text-anchor="middle" >A</text></svg>
<svg style="left:96.7px;top:755px" width="36" height="36" viewBox="0 0 36 36"><text x="28" y="19" font-family="Liberation Serif" font-weight="bold" font-size="17" fill="#a30d0d" text-anchor="middle" >A</text><path d="M18 12L5 25" stroke="#a30d0d" stroke-width="1.8"/><path d="M4 27L6 17L13 24Z" fill="#a30d0d"/></svg>
<svg style="left:137.4px;top:755px" width="36" height="36" viewBox="0 0 36 36"><text x="10" y="31" font-family="Liberation Serif" font-weight="bold" font-size="15" fill="#a30d0d" text-anchor="middle" >A</text><text x="24" y="14" font-family="Liberation Serif" font-weight="bold" font-size="15" fill="#2f6cff" text-anchor="middle" >B</text><path d="M22 30h3v-6" fill="none" stroke="#6e5c1c" stroke-width="1.5"/><path d="M21.5 24L25 19L28.5 24Z" fill="#000"/></svg>
<svg style="left:178.1px;top:755px" width="36" height="36" viewBox="0 0 36 36"><text x="18" y="14" font-family="Liberation Serif" font-weight="bold" font-size="14" fill="#a30d0d" text-anchor="middle" >ABC</text><path d="M9 21L17 30L28 17L18 25Z" fill="#5a4040"/></svg>
<svg style="left:218.8px;top:755px" width="36" height="36" viewBox="0 0 36 36"><text x="13" y="33" font-family="Liberation Serif" font-weight="bold" font-size="34" fill="#a30d0d" text-anchor="middle" >C</text><text x="29" y="13" font-family="Liberation Serif" font-weight="bold" font-size="14" fill="#a30d0d" text-anchor="middle" >C</text><path d="M25 30h3v-6" fill="none" stroke="#6e5c1c" stroke-width="1.5"/><path d="M24.5 24L28 19L31.5 24Z" fill="#000"/></svg>
<svg style="left:259.5px;top:755px" width="36" height="36" viewBox="0 0 36 36"><text x="18" y="31" font-family="Liberation Serif" font-weight="bold" font-size="14" fill="#a30d0d" text-anchor="middle" >ABC</text><text x="18" y="17" font-family="Liberation Serif" font-weight="bold" font-size="16" fill="#d010c0" text-anchor="middle" >?</text></svg>
<svg style="left:300.2px;top:755px" width="36" height="36" viewBox="0 0 36 36"><text x="10" y="31" font-family="Liberation Serif" font-weight="bold" font-size="15" fill="#a30d0d" text-anchor="middle" >A</text><text x="25" y="14" font-family="Liberation Serif" font-weight="bold" font-size="15" fill="#a30d0d" text-anchor="middle" >A</text><path d="M22 30h3v-6" fill="none" stroke="#6e5c1c" stroke-width="1.5"/><path d="M21.5 24L25 19L28.5 24Z" fill="#000"/></svg>
<svg style="left:56.0px;top:794px" width="36" height="36" viewBox="0 0 36 36"><text x="8" y="32" font-family="Liberation Serif" font-weight="bold" font-size="14" fill="#a30d0d" text-anchor="middle" >A</text><text x="24" y="16" font-family="Liberation Serif" font-weight="normal" font-size="18" fill="#2f6cff" text-anchor="middle" font-style="italic">A</text><path d="M20 31h3v-6" fill="none" stroke="#6e5c1c" stroke-width="1.5"/><path d="M19.5 25L23 20L26.5 25Z" fill="#000"/></svg>
<svg style="left:96.7px;top:794px" width="36" height="36" viewBox="0 0 36 36"><text x="11" y="15" font-family="Liberation Serif" font-weight="bold" font-size="16" fill="#a30d0d" text-anchor="middle" >1</text><path d="M10 24H27M18.5 16V33" stroke="#a30d0d" stroke-width="1.3"/><circle cx="18.5" cy="24.500" r="2.6" fill="#fff" stroke="#a30d0d" stroke-width="1.2"/></svg>
<svg style="left:137.4px;top:794px" width="36" height="36" viewBox="0 0 36 36"><text x="2" y="13" font-family="Liberation Serif" font-weight="bold" font-size="11" fill="#a30d0d" text-anchor="start" >A</text><text x="10" y="13" font-family="Liberation Serif" font-weight="bold" font-size="11" fill="#2f6cff" text-anchor="start" >1</text><text x="15" y="13" font-family="Liberation Serif" font-weight="bold" font-size="11" fill="#a30d0d" text-anchor="start" >A</text><text x="8" y="31" font-family="Liberation Serif" font-weight="bold" font-size="11" fill="#a30d0d" text-anchor="start" >A</text><text x="16" y="31" font-family="Liberation Serif" font-weight="bold" font-size="11" fill="#2f6cff" text-anchor="start" >2</text><text x="22" y="31" font-family="Liberation Serif" font-weight="bold" font-size="11" fill="#a30d0d" text-anchor="start" >A</text></svg>
<svg style="left:178.1px;top:794px" width="36" height="36" viewBox="0 0 36 36"><text x="3" y="14" font-family="Liberation Serif" font-weight="bold" font-size="13" fill="#a30d0d" text-anchor="start" >A1</text><text x="16" y="31" font-family="Liberation Serif" font-weight="bold" font-size="13" fill="#2f6cff" text-anchor="start" >A1</text><path d="M4 17H17M17 33H32" stroke="#2f6cff" stroke-width="1.2" stroke-dasharray="3 1.5"/></svg>
<svg style="left:218.8px;top:794px" width="36" height="36" viewBox="0 0 36 36"><text x="3" y="14" font-family="Liberation Serif" font-weight="bold" font-size="13" fill="#a30d0d" text-anchor="start" >A1</text><text x="16" y="31" font-family="Liberation Serif" font-weight="bold" font-size="13" fill="#2f6cff" text-anchor="start" >A2</text><path d="M4 17H17M17 33H32" stroke="#2f6cff" stroke-width="1.2" stroke-dasharray="3 1.5"/></svg>
<svg style="left:259.5px;top:794px" width="36" height="36" viewBox="0 0 36 36"><rect x="5" y="9" width="27" height="22" fill="none" stroke="#222" stroke-width="1.5" stroke-dasharray="2 1.4"/><text x="18.5" y="22" font-family="Liberation Serif" font-weight="bold" font-size="11.5" fill="#a30d0d" text-anchor="middle" >ABC</text><path d="M8 26H29" stroke="#a30d0d" stroke-width="1.5" stroke-dasharray="3 2"/></svg>
<svg style="left:300.2px;top:794px" width="36" height="36" viewBox="0 0 36 36"><rect x="5" y="5" width="27" height="9" fill="none" stroke="#222" stroke-width="1.3" stroke-dasharray="1.6 1.4"/><path d="M8 9.5H29" stroke="#3b7cff" stroke-width="1.6" stroke-dasharray="4 2"/><path d="M8 18H29M8 26H29" stroke="#222" stroke-width="1.6" stroke-dasharray="4 2.5"/></svg>
<svg style="left:56.0px;top:835px" width="36" height="36" viewBox="0 0 36 36"><path d="M4 18H32M18 4V32M8.9 8.9L27.1 27.1M27.1 8.9L8.9 27.1" stroke="#3b7cff" stroke-width="1.2"/><path d="M11.7 18L18 11.7L24.3 18L18 24.3Z" fill="#eef2ff" stroke="#3b7cff" stroke-width="1"/><circle cx="18" cy="18" r="1" fill="#20a"/></svg>
<svg style="left:96.7px;top:835px" width="36" height="36" viewBox="0 0 36 36"><path d="M3.5 10H16.5M10 3.5V16.5M5.8 5.8L14.2 14.2M14.2 5.8L5.8 14.2" stroke="#a89878" stroke-width="1.2"/><path d="M19.5 10H32.5M26 3.5V16.5M21.8 5.8L30.2 14.2M30.2 5.8L21.8 14.2" stroke="#a89878" stroke-width="1.2"/><path d="M3.5 26H16.5M10 19.5V32.5M5.8 21.8L14.2 30.2M14.2 21.8L5.8 30.2" stroke="#3b7cff" stroke-width="1.3"/><path d="M19.5 26H32.5M26 19.5V32.5M21.8 21.8L30.2 30.2M30.2 21.8L21.8 30.2" stroke="#a89878" stroke-width="1.2"/><circle cx="10" cy="10" r="2" fill="#ccc"/><circle cx="26" cy="10" r="2" fill="#ccc"/><circle cx="26" cy="26" r="2.4" fill="#bbb"/></svg>
<svg style="left:137.4px;top:835px" width="36" height="36" viewBox="0 0 36 36"><path d="M18.5 10H31.5M25 3.5V16.5M20.8 5.8L29.2 14.2M29.2 5.8L20.8 14.2" stroke="#3b7cff" stroke-width="1.2"/><path d="M2.5 26H15.5M9 19.5V32.5M4.8 21.8L13.2 30.2M13.2 21.8L4.8 30.2" stroke="#3b7cff" stroke-width="1.2"/><path d="M22 32h3v-6" fill="none" stroke="#6e5c1c" stroke-width="1.5"/><path d="M21.5 26L25 21L28.5 26Z" fill="#000"/></svg>
<svg style="left:178.1px;top:835px" width="36" height="36" viewBox="0 0 36 36"><path d="M5 20H27M16 9V31M8.8 12.8L23.1 27.1M23.1 12.8L8.8 27.1" stroke="#3b7cff" stroke-width="1.2"/><path d="M11.05 20L16 15.05L20.95 20L16 24.95Z" fill="#eef2ff" stroke="#3b7cff" stroke-width="1"/><circle cx="16" cy="20" r="1" fill="#20a"/><ellipse cx="28" cy="8" rx="3.8" ry="3.5" fill="none" stroke="#222" stroke-width="1.6"/></svg>
<svg style="left:218.8px;top:835px" width="36" height="36" viewBox="0 0 36 36"><path d="M5 22H25M15 12V32M8.5 15.5L21.5 28.5M21.5 15.5L8.5 28.5" stroke="#3b7cff" stroke-width="1.2"/><path d="M10.5 22L15 17.5L19.5 22L15 26.5Z" fill="#eef2ff" stroke="#3b7cff" stroke-width="1"/><circle cx="15" cy="22" r="1" fill="#20a"/><text x="27" y="18" font-family="Liberation Serif" font-weight="bold" font-size="18" fill="#d010c0" text-anchor="middle" >?</text></svg>
<svg style="left:259.5px;top:835px" width="36" height="36" viewBox="0 0 36 36"><path d="M5 30L24 11" stroke="#111" stroke-width="1.8"/><path d="M20 9L31 5L28 16Z" fill="#fff" stroke="#2f6cff" stroke-width="1.4"/></svg>
<svg style="left:300.2px;top:835px" width="36" height="36" viewBox="0 0 36 36"><path d="M2.5 9H15.5M9 2.5V15.5M4.8 4.8L13.2 13.2M13.2 4.8L4.8 13.2" stroke="#3b7cff" stroke-width="1.2"/><path d="M11.5 8H24.5M18 1.5V14.5M13.8 3.8L22.2 12.2M22.2 3.8L13.8 12.2" stroke="#3b7cff" stroke-width="1.2"/><path d="M20.5 9H33.5M27 2.5V15.5M22.8 4.8L31.2 13.2M31.2 4.8L22.8 13.2" stroke="#3b7cff" stroke-width="1.2"/><path d="M3.5 26H16.5M10 19.5V32.5M5.8 21.8L14.2 30.2M14.2 21.8L5.8 30.2" stroke="#3b7cff" stroke-width="1.2"/><path d="M24 32h3v-6" fill="none" stroke="#6e5c1c" stroke-width="1.5"/><path d="M23.5 26L27 21L30.5 26Z" fill="#000"/></svg>
<svg style="left:56.0px;top:873px" width="36" height="36" viewBox="0 0 36 36"><rect x="5" y="5" width="27" height="26" fill="#fff" stroke="#222" stroke-width="1.5"/><path d="M18.5 5V31M5 13.5H32M5 18H32M5 26.500H32" stroke="#222" stroke-width="1.3"/><rect x="6" y="14" width="25" height="3.500" fill="#8ccaf8"/><rect x="6" y="27" width="25" height="3.500" fill="#8ccaf8"/><rect x="8" y="7.500" width="8" height="4" fill="#bbb"/><rect x="21" y="7.500" width="8" height="4" fill="#bbb"/><rect x="8" y="20" width="8" height="4.500" fill="#999"/><rect x="21" y="20" width="8" height="4.500" fill="#999"/></svg>
<svg style="left:56.0px;top:911px" width="36" height="32" viewBox="0 0 36 32"><path d="M10 18H26" stroke="#3b7cff" stroke-width="1.2" stroke-dasharray="2 1.6"/><ellipse cx="8" cy="18" rx="3" ry="2.3" fill="#fff" stroke="#3b7cff" stroke-width="1.3"/><ellipse cx="28" cy="18" rx="3" ry="2.3" fill="#fff" stroke="#3b7cff" stroke-width="1.3"/><path d="M4 31H34" stroke="#d8cc30" stroke-width="1.6" stroke-dasharray="2.5 1.5"/></svg>
<svg style="left:96.7px;top:911px" width="36" height="32" viewBox="0 0 36 32"><path d="M9 10C22 10 28 18 28 29" fill="none" stroke="#6e5c1c" stroke-width="1.8"/><path d="M13 25L25 14" stroke="#3b7cff" stroke-width="1.5"/><circle cx="13" cy="25" r="1.800" fill="#3b7cff"/><path d="M4 31H34" stroke="#d8cc30" stroke-width="1.6" stroke-dasharray="2.5 1.5"/></svg>
<svg style="left:137.4px;top:911px" width="36" height="32" viewBox="0 0 36 32"><path d="M29 10L9 29H31" fill="none" stroke="#6e5c1c" stroke-width="1.7"/><path d="M20 19C23 22 24 25 24 29" fill="none" stroke="#3b7cff" stroke-width="1.2"/><path d="M4 31H34" stroke="#d8cc30" stroke-width="1.6" stroke-dasharray="2.5 1.5"/></svg>
<svg style="left:178.1px;top:911px" width="36" height="32" viewBox="0 0 36 32"><path d="M5 12H32" stroke="#6e5c1c" stroke-width="1.6"/><circle cx="5" cy="12" r="1.500" fill="#111"/><circle cx="32" cy="12" r="1.500" fill="#111"/><path d="M5 15V27M32 15V27M5 21H32M9 18L5 21L9 24M28 18L32 21L28 24" fill="none" stroke="#3b7cff" stroke-width="1.4"/><path d="M4 31H34" stroke="#d8cc30" stroke-width="1.6" stroke-dasharray="2.5 1.5"/></svg>
<svg style="left:218.8px;top:911px" width="36" height="32" viewBox="0 0 36 32"><rect x="4" y="12" width="29" height="14" rx="7" fill="#f1f0ff" stroke="#3b7cff" stroke-width="1.5"/><path d="M4 31H34" stroke="#d8cc30" stroke-width="1.6" stroke-dasharray="2.5 1.5"/></svg>
<svg style="left:259.5px;top:911px" width="36" height="32" viewBox="0 0 36 32"><path d="M3 17L20 10L34 14V24L17 30L3 25Z" fill="#f4f4f4" stroke="#3b7cff" stroke-width="1.5"/><path d="M3 17L17 21L34 14M17 21V30" fill="none" stroke="#3b7cff" stroke-width="1.2"/><path d="M3 17L17 21V30L3 25Z" fill="#ddd"/><path d="M4 31H34" stroke="#d8cc30" stroke-width="1.6" stroke-dasharray="2.5 1.5"/></svg>
<div style="left:30px;top:944px;width:324px;height:5.5px;background:#f2f2f2;"></div>
<div style="left:30px;top:950.7px;width:1934px;height:80px;background:#f0f0f0;"></div>
<div style="left:30px;top:951px;width:1129px;height:47px;background:linear-gradient(#fbfbfb,#f1f1f1 50%,#e2e2e2 92%,#d6d6d6);border-radius:0 6px 6px 0;box-shadow:1px 1px 1px rgba(0,0,0,.15);"></div>
<svg style="left:36px;top:960.5px;" width="29" height="29" viewBox="0 0 29 29"><defs><linearGradient id="cg0" x1="0" y1="0" x2="0" y2="1"><stop offset="0" stop-color="#c4c4c4"/><stop offset="1" stop-color="#9c9c9c"/></linearGradient></defs><circle cx="14.500" cy="14.500" r="14" fill="url(#cg0)"/><path d="M20 14.500H9M13.500 9L8 14.500L13.500 20" fill="none" stroke="#f4f4f4" stroke-width="3.200"/></svg>
<svg style="left:77.5px;top:971px;" width="10" height="6" viewBox="0 0 10 6"><path d="M0 0H10L5 5.500Z" fill="#555"/></svg>
<svg style="left:98px;top:960.5px;" width="29" height="29" viewBox="0 0 29 29"><defs><linearGradient id="cg1" x1="0" y1="0" x2="0" y2="1"><stop offset="0" stop-color="#c4c4c4"/><stop offset="1" stop-color="#9c9c9c"/></linearGradient></defs><circle cx="14.500" cy="14.500" r="14" fill="url(#cg1)"/><path d="M9 14.500H20M15.500 9L21 14.500L15.500 20" fill="none" stroke="#f4f4f4" stroke-width="3.200"/></svg>
<svg style="left:139px;top:971px;" width="10" height="6" viewBox="0 0 10 6"><path d="M0 0H10L5 5.500Z" fill="#555"/></svg>
<svg style="left:158px;top:958px;" width="34" height="34" viewBox="0 0 34 34"><ellipse cx="17" cy="27" rx="14" ry="5" fill="#ececec" stroke="#cfcfcf" stroke-width="1"/><path d="M11 3L15 25L27 24" fill="none" stroke="#b8b8b8" stroke-width="1.600"/><path d="M15 25L9 10" stroke="#c8c8c8" stroke-width="1.200"/></svg>
<svg style="left:201px;top:971px;" width="10" height="6" viewBox="0 0 10 6"><path d="M0 0H10L5 5.500Z" fill="#555"/></svg>
<div style="left:220px;top:961.3px;width:183.8px;height:26.2px;background:#e2e2e2;border:1px solid #a2a2a2;"></div>
<svg style="left:223px;top:966px;" width="23" height="18" viewBox="0 0 23 18"><rect x="1" y="2" width="11" height="9" fill="#fff" stroke="#445" stroke-width="1.300"/><rect x="7" y="6" width="14" height="10" fill="#e8f0ff" stroke="#445" stroke-width="1.300"/></svg>
<span class="t" style="left:252.79px;top:964.5px;font-size:16px;line-height:22px;color:#111;transform:scaleX(0.9690);">Model Views</span>
<svg style="left:385px;top:972.5px;" width="10" height="6" viewBox="0 0 10 6"><path d="M0 0H10L5 5.500Z" fill="#000"/></svg>
<div style="left:410px;top:955px;width:1px;height:40px;background:#b0b0b0;"></div>
<div style="left:411px;top:955px;width:1px;height:40px;background:#fff;"></div>
<svg style="left:418px;top:961px;" width="34" height="26" viewBox="0 0 34 26"><defs><linearGradient id="wt" x1="0" y1="0" x2="1" y2="0"><stop offset="0" stop-color="#2a4a9a"/><stop offset="1" stop-color="#c8d8f8"/></linearGradient></defs><g stroke="#556" stroke-width="1.200"><rect x="1.500" y="1.500" width="17" height="12" fill="#fbfbff"/><rect x="4.500" y="9.500" width="17" height="12" fill="#f6f4fc"/><rect x="13.500" y="6.500" width="17" height="12.500" fill="#eeeafc"/></g><rect x="2" y="2" width="16" height="2" fill="url(#wt)"/><rect x="5" y="10" width="9" height="2" fill="url(#wt)"/><rect x="14" y="7" width="16" height="2.200" fill="url(#wt)"/></svg>
<div style="left:459px;top:955px;width:1px;height:40px;background:#b0b0b0;"></div>
<div style="left:460px;top:955px;width:1px;height:40px;background:#fff;"></div>
<div style="left:462.5px;top:960.5px;width:163px;height:28px;background:#fdfdfd;border-left:1px solid #a0a0a0;border-top:1px solid #a0a0a0;"></div>
<div style="left:464.3px;top:962px;width:20.1px;height:26px;background:linear-gradient(#fbdc98,#f8ab42 50%,#fde8a6);border-right:2px solid #444;border-bottom:1px solid #777;"></div>
<span class="t" style="left:467.60px;top:963.5px;font-size:17px;line-height:23px;color:#111;transform:scaleX(1.2000);">1</span>
<div style="left:484.40000000000003px;top:962px;width:20.1px;height:26px;background:linear-gradient(#fdfdfd,#ececec);border-right:2px solid #444;border-bottom:1px solid #777;"></div>
<span class="t" style="left:488.36px;top:963.5px;font-size:17px;line-height:23px;color:#111;transform:scaleX(1.1250);">2</span>
<div style="left:504.5px;top:962px;width:20.1px;height:26px;background:linear-gradient(#fdfdfd,#ececec);border-right:2px solid #444;border-bottom:1px solid #777;"></div>
<span class="t" style="left:508.46px;top:963.5px;font-size:17px;line-height:23px;color:#111;transform:scaleX(1.1250);">3</span>
<div style="left:524.6px;top:962px;width:20.1px;height:26px;background:linear-gradient(#fdfdfd,#ececec);border-right:2px solid #444;border-bottom:1px solid #777;"></div>
<span class="t" style="left:529.14px;top:963.5px;font-size:17px;line-height:23px;color:#111;transform:scaleX(1.0286);">4</span>
<div style="left:544.7px;top:962px;width:20.1px;height:26px;background:linear-gradient(#fdfdfd,#ececec);border-right:2px solid #444;border-bottom:1px solid #777;"></div>
<span class="t" style="left:548.66px;top:963.5px;font-size:17px;line-height:23px;color:#111;transform:scaleX(1.1250);">5</span>
<div style="left:564.8px;top:962px;width:20.1px;height:26px;background:linear-gradient(#fdfdfd,#ececec);border-right:2px solid #444;border-bottom:1px solid #777;"></div>
<span class="t" style="left:568.76px;top:963.5px;font-size:17px;line-height:23px;color:#111;transform:scaleX(1.1250);">6</span>
<div style="left:584.9px;top:962px;width:20.1px;height:26px;background:linear-gradient(#fdfdfd,#ececec);border-right:2px solid #444;border-bottom:1px solid #777;"></div>
<span class="t" style="left:588.86px;top:963.5px;font-size:17px;line-height:23px;color:#111;transform:scaleX(1.1250);">7</span>
<div style="left:605.0px;top:962px;width:20.1px;height:26px;background:linear-gradient(#fdfdfd,#ececec);border-right:2px solid #444;border-bottom:1px solid #777;"></div>
<span class="t" style="left:608.96px;top:963.5px;font-size:17px;line-height:23px;color:#111;transform:scaleX(1.1250);">8</span>
<div style="left:627px;top:950.7px;width:5px;height:48px;background:#f0f0f0;"></div>
<div style="left:632px;top:951px;width:6px;height:47px;background:linear-gradient(#fbfbfb,#f1f1f1 50%,#e2e2e2 92%,#d6d6d6);border-radius:6px 0 0 6px;"></div>
<div style="left:637.5px;top:963.0px;width:2px;height:2px;background:#8a8a8a;"></div>
<div style="left:637.5px;top:967.2px;width:2px;height:2px;background:#8a8a8a;"></div>
<div style="left:637.5px;top:971.4px;width:2px;height:2px;background:#8a8a8a;"></div>
<div style="left:637.5px;top:975.6px;width:2px;height:2px;background:#8a8a8a;"></div>
<div style="left:637.5px;top:979.8px;width:2px;height:2px;background:#8a8a8a;"></div>
<div style="left:637.5px;top:984.0px;width:2px;height:2px;background:#8a8a8a;"></div>
<span class="t" style="left:660.72px;top:961.5px;font-size:21px;line-height:27px;color:#111;font-weight:bold;transform:scaleX(1.1111);">X</span>
<div style="left:686px;top:964.5px;width:198px;height:22px;background:#fff;border:1px solid #9a9a9a;"></div>
<span class="t" style="left:695.28px;top:964.5px;font-size:16px;line-height:22px;color:#8c8c8c;transform:scaleX(0.9565);">589658.3547</span>
<div style="left:895px;top:952px;width:1px;height:44px;background:#c4c4c4;"></div>
<div style="left:896px;top:952px;width:1px;height:44px;background:#fff;"></div>
<span class="t" style="left:910.72px;top:961.5px;font-size:21px;line-height:27px;color:#111;font-weight:bold;transform:scaleX(1.1111);">Y</span>
<div style="left:936px;top:964.5px;width:198px;height:22px;background:#fff;border:1px solid #9a9a9a;"></div>
<span class="t" style="left:942.25px;top:964.5px;font-size:16px;line-height:22px;color:#8c8c8c;transform:scaleX(1.0000);">2212322.7680</span>
<div style="left:30px;top:997.3px;width:1129px;height:1.2px;background:#b9b9b9;"></div>
<div style="left:30px;top:999.5px;width:1934px;height:1px;background:#d2d2d2;"></div>
<span class="t" style="left:22.81px;top:1005.5px;font-size:16px;line-height:22px;color:#111;transform:scaleX(0.9542);">Display complete</span>
<div style="left:590.5px;top:1007.0px;width:2.5px;height:2.5px;background:#999;border-radius:1px;"></div>
<div style="left:590.5px;top:1012.5px;width:2.5px;height:2.5px;background:#999;border-radius:1px;"></div>
<div style="left:590.5px;top:1018.0px;width:2.5px;height:2.5px;background:#999;border-radius:1px;"></div>
<div style="left:590.5px;top:1023.5px;width:2.5px;height:2.5px;background:#999;border-radius:1px;"></div>
<div style="left:596px;top:999.5px;width:1.5px;height:26px;background:#b4b4b4;"></div>
<div style="left:598.3px;top:1001px;width:37px;height:30px;background:#f2f2f2;border-left:1.500px solid #a2a2a2;border-top:1.500px solid #a2a2a2;border-right:1px solid #fff;"></div>
<svg style="left:627.5px;top:1003.5px;" width="8" height="4.5" viewBox="0 0 8 4.5"><path d="M0 4.500H8L4 0Z" fill="#000"/></svg>
<span class="t" style="left:639.25px;top:1005.5px;font-size:16px;line-height:22px;color:#111;transform:scaleX(0.9916);">Tạo thửa đất thành công!</span>
<div style="left:1311.8px;top:1001px;width:40.0px;height:30px;background:#f2f2f2;border-left:1.500px solid #a2a2a2;border-top:1.500px solid #a2a2a2;border-right:1px solid #fff;"></div>
<div style="left:1354.3px;top:1001px;width:35px;height:30px;background:#f2f2f2;border-left:1.500px solid #a2a2a2;border-top:1.500px solid #a2a2a2;border-right:1px solid #fff;"></div>
<div style="left:1394.3px;top:1001px;width:165px;height:30px;background:#f2f2f2;border-left:1.500px solid #a2a2a2;border-top:1.500px solid #a2a2a2;border-right:1px solid #fff;"></div>
<div style="left:1563.3px;top:1001px;width:147px;height:30px;background:#f2f2f2;border-left:1.500px solid #a2a2a2;border-top:1.500px solid #a2a2a2;border-right:1px solid #fff;"></div>
<div style="left:1715.3px;top:1001px;width:35px;height:30px;background:#f2f2f2;border-left:1.500px solid #a2a2a2;border-top:1.500px solid #a2a2a2;border-right:1px solid #fff;"></div>
<div style="left:1755.3px;top:1001px;width:36.5px;height:30px;background:#f2f2f2;border-left:1.500px solid #a2a2a2;border-top:1.500px solid #a2a2a2;border-right:1px solid #fff;"></div>
<div style="left:1796.8px;top:1001px;width:35.0px;height:30px;background:#f2f2f2;border-left:1.500px solid #a2a2a2;border-top:1.500px solid #a2a2a2;border-right:1px solid #fff;"></div>
<div style="left:1836.8px;top:1001px;width:36.5px;height:30px;background:#f2f2f2;border-left:1.500px solid #a2a2a2;border-top:1.500px solid #a2a2a2;border-right:1px solid #fff;"></div>
<div style="left:1876.8px;top:1001px;width:36.5px;height:30px;background:#f2f2f2;border-left:1.500px solid #a2a2a2;border-top:1.500px solid #a2a2a2;border-right:1px solid #fff;"></div>
<div style="left:1916.8px;top:1001px;width:38.5px;height:30px;background:#f2f2f2;border-left:1.500px solid #a2a2a2;border-top:1.500px solid #a2a2a2;border-right:1px solid #fff;"></div>
<div style="left:1958.3px;top:1001px;width:31px;height:30px;background:#f2f2f2;border-left:1.500px solid #a2a2a2;border-top:1.500px solid #a2a2a2;border-right:1px solid #fff;"></div>
<svg style="left:1322px;top:1005px;" width="18" height="18" viewBox="0 0 18 18"><path d="M3 14C6 16 10 14 9 11C8 8 13 7 14 4" fill="none" stroke="#3b6cd8" stroke-width="1.300"/><circle cx="3" cy="14" r="1.800" fill="#fff" stroke="#3b6cd8"/><circle cx="9" cy="12" r="1.800" fill="#fff" stroke="#3b6cd8"/><circle cx="14" cy="4" r="1.800" fill="#fff" stroke="#3b6cd8"/></svg>
<svg style="left:1362px;top:1005px;" width="18" height="18" viewBox="0 0 18 18"><path d="M5 9V6C5 1 13 1 13 6V9" fill="none" stroke="#555" stroke-width="1.800"/><rect x="2" y="9" width="14" height="9" fill="#c8c030" stroke="#8a8418" stroke-width="1"/></svg>
<span class="t" style="left:1395.74px;top:1005.5px;font-size:16px;line-height:22px;color:#111;transform:scaleX(1.0087);">Level 11</span>
<svg style="left:1805px;top:1008px;" width="18" height="18" viewBox="0 0 18 18"><rect x="1" y="1" width="15" height="16" rx="1" fill="#5a6a9a" stroke="#334" stroke-width="1"/><rect x="4" y="2" width="9" height="6" fill="#e8e8f0"/><rect x="4" y="11" width="9" height="6" fill="#dde"/></svg>
<svg style="left:1845px;top:1008px;" width="20" height="18" viewBox="0 0 20 18"><path d="M4 2H18C16 5 19 7 17 10C15 13 18 15 16 17H2C4 15 1 13 3 10C5 7 2 5 4 2Z" fill="#eee" stroke="#999" stroke-width="1.300"/></svg>
<div style="left:388.7px;top:190.5px;width:1600px;height:753.5px;background:linear-gradient(#9db9da 0px,#b4cde9 20px,#c7dcf3 42px,#c1d6ee 100%);border:1.300px solid #2a2a2a;border-radius:9px 0 0 0;"></div>
<div style="left:390px;top:941.6px;width:1600px;height:1.4px;background:#45c6e0;"></div>
<div style="left:390px;top:199px;width:1.5px;height:742px;background:linear-gradient(90deg,#dfe6ee,#e6f0fb);"></div>
<div style="left:389px;top:944px;width:1600px;height:6.7px;background:#b2b2b2;"></div>
<div style="left:404px;top:206px;width:20px;height:20px;background:linear-gradient(135deg,#f4f8fc,#cfdcec);border-radius:3px;"></div>
<div style="left:409px;top:210px;width:11px;height:11px;background:#3a3a3a;"></div>
<span class="t" style="left:432.00px;top:206.5px;font-size:17px;line-height:23px;color:#111;transform:scaleX(1.0047);">View 1, Model</span>
<div style="left:400px;top:234px;width:1600px;height:32px;background:linear-gradient(#fafbfd 0px,#f0f0f0 2px,#f0f0f0);"></div>
<div style="left:400.5px;top:266px;width:1600px;height:667px;background:#253333;"></div>
<div style="left:400.5px;top:266px;width:1600px;height:2px;background:#3a4a4a;"></div>
<svg style="left:405px;top:240px;" width="26" height="22" viewBox="0 0 26 22"><rect x="1" y="1" width="19" height="14" fill="#fdfdff" stroke="#667" stroke-width="1.200"/><rect x="1.500" y="1.500" width="18" height="2.500" fill="#c8d4ec"/><rect x="9.500" y="8.500" width="13.500" height="12" rx="1" fill="#cfe4fb" stroke="#4a8ae8" stroke-width="1.300"/><path d="M11.500 12.500H14" stroke="#e03030" stroke-width="2"/><path d="M11.500 17H14" stroke="#30b030" stroke-width="2"/><path d="M15.500 12.500H21M15.500 17H21" stroke="#889" stroke-width="1.600"/></svg>
<svg style="left:438.5px;top:247px;" width="11" height="6" viewBox="0 0 11 6"><path d="M0 0H11L5.500 6Z" fill="#000"/></svg>
<svg style="left:458px;top:238px;" width="26" height="24" viewBox="0 0 26 24"><path d="M2 13L5 6L14 2L22 3L23 11L20 18L10 21L3 19Z" fill="#3a96f0" stroke="#1a6cd8" stroke-width="1"/><path d="M8 10L14 6L19 8V13L13 17L8 15Z" fill="#dff0ff"/><path d="M8 10L13 12L19 8M13 12V17" fill="none" stroke="#3a96f0" stroke-width="1"/><circle cx="8" cy="14" r="2.500" fill="#1a78e8"/></svg>
<svg style="left:479px;top:259px;" width="6" height="4" viewBox="0 0 6 4"><path d="M0 0H6L3 3.500Z" fill="#000"/></svg>
<svg style="left:489px;top:235.5px;" width="28" height="28" viewBox="0 0 28 28"><defs><radialGradient id="sg" cx=".4" cy=".35" r=".7"><stop offset="0" stop-color="#f4ffff"/><stop offset=".6" stop-color="#a8d8f0"/><stop offset="1" stop-color="#7888b0"/></radialGradient></defs><path d="M14 3V25M3 14H25M6 6L22 22M22 6L6 22" stroke="#4a4a4a" stroke-width="1.800"/><circle cx="14" cy="14" r="7" fill="url(#sg)"/></svg>
<svg style="left:524.5px;top:247px;" width="11" height="6" viewBox="0 0 11 6"><path d="M0 0H11L5.500 6Z" fill="#000"/></svg>
<div style="left:544px;top:237px;width:1px;height:27px;background:#9a9a9a;"></div>
<div style="left:545px;top:237px;width:1px;height:27px;background:#fff;"></div>
<svg style="left:555px;top:236px;" width="22" height="28" viewBox="0 0 22 28"><path d="M9 2H12L13 12H8Z" fill="#a83030" stroke="#701818" stroke-width=".800"/><path d="M6 12H15L16 15H5Z" fill="#c8c8c8" stroke="#666" stroke-width=".800"/><path d="M5 15H16L18 21H3Z" fill="#8aa8c8" stroke="#567" stroke-width=".800"/><path d="M2 21.500H19" stroke="#2a8cf0" stroke-width="1.800"/></svg>
<svg style="left:585.3px;top:236.5px;" width="24" height="28" viewBox="0 0 24 28"><path d="M12 13L17.500 22" stroke="#e8902a" stroke-width="2.800"/><circle cx="8.500" cy="8.500" r="6.200" fill="#dff2ff" stroke="#444" stroke-width="1.500"/><path d="M5.500 8.500H11.500" stroke="#222" stroke-width="1.400"/><path d="M8.500 5.500V11.500" stroke="#222" stroke-width="1.400"/></svg>
<svg style="left:617.8px;top:236.5px;" width="24" height="28" viewBox="0 0 24 28"><path d="M12 13L17.500 22" stroke="#e8902a" stroke-width="2.800"/><circle cx="8.500" cy="8.500" r="6.200" fill="#dff2ff" stroke="#444" stroke-width="1.500"/><path d="M5.500 8.500H11.500" stroke="#222" stroke-width="1.400"/></svg>
<svg style="left:648px;top:237px;" width="24" height="22" viewBox="0 0 24 22"><rect x="6" y="3" width="16" height="17" fill="none" stroke="#222" stroke-width="1.300" stroke-dasharray="3 2"/><path d="M10 11L16 19" stroke="#e8902a" stroke-width="2.800"/><circle cx="7.500" cy="7" r="5.800" fill="#cfeaff" stroke="#555" stroke-width="1.300"/></svg>
<div style="left:677px;top:235px;width:31.6px;height:29.5px;background:linear-gradient(#f9b95a,#fbd07a 45%,#fdf0a8);border:1px solid #3b7cd8;"></div>
<svg style="left:681.5px;top:239.5px;" width="23" height="19" viewBox="0 0 23 19"><defs><linearGradient id="vt" x1="0" y1="0" x2="1" y2="0"><stop offset="0" stop-color="#1a3a8a"/><stop offset="1" stop-color="#d0dcf4"/></linearGradient></defs><rect x="1" y="1" width="21" height="17" fill="#eeeaf8" stroke="#333" stroke-width="1.300"/><rect x="1.500" y="1.500" width="20" height="3" fill="url(#vt)"/><path d="M3.500 11H19.500M11.500 5.500V16.500M6 8.500L3.500 11L6 13.500M17 8.500L19.500 11L17 13.500M9.500 7.500L11.500 5.500L13.500 7.500M9.500 14.500L11.500 16.500L13.500 14.500" fill="none" stroke="#111" stroke-width="1.200"/></svg>
<svg style="left:713px;top:237px;" width="22" height="24" viewBox="0 0 22 24"><path d="M12 3C5 4 1 9 3 13C5 17 10 16 12 13" fill="none" stroke="#5ab0f4" stroke-width="3"/><path d="M1 11L7 9L6 15Z" fill="#3a96f0"/><path d="M8 21C15 21 19 15 17 8" fill="none" stroke="#1a50c8" stroke-width="3"/><path d="M12.500 9.500L17.500 3L21 10Z" fill="#1a50c8"/></svg>
<svg style="left:746px;top:237px;" width="22" height="25" viewBox="0 0 22 25"><path d="M5 13V7.500C5 5.800 7.500 5.800 7.500 7.500V4C7.500 2.200 10.200 2.200 10.200 4V3C10.200 1.200 13 1.200 13 3V4.500C13 2.800 15.600 2.800 15.600 4.500V8.500C15.600 7 18.200 7 18.200 8.500V16C18.200 20.500 15.500 23 11 23C7.500 23 5.500 20.500 3 16.500C2 14.500 3.800 13 5 13Z" fill="#ece8fa" stroke="#1a3cb8" stroke-width="1.400"/><path d="M7.500 7.500V12M10.200 4V12M13 4.500V12M15.600 8.500V13" stroke="#1a3cb8" stroke-width="1"/></svg>
<div style="left:776px;top:237px;width:1px;height:27px;background:#9a9a9a;"></div>
<div style="left:777px;top:237px;width:1px;height:27px;background:#fff;"></div>
<svg style="left:785px;top:240px;" width="23" height="19" viewBox="0 0 23 19"><rect x="1" y="1" width="21" height="17" fill="#f4f2fa" stroke="#555" stroke-width="1.200"/><rect x="1.500" y="1.500" width="20" height="2.800" fill="url(#vt)"/><path d="M7 13C9 7.500 15 7.500 18 12" fill="none" stroke="#444" stroke-width="1.200"/><path d="M4.500 10L5.500 15.500L10.500 13Z" fill="#111"/></svg>
<svg style="left:817px;top:240px;" width="23" height="19" viewBox="0 0 23 19"><rect x="1" y="1" width="21" height="17" fill="#f4f2fa" stroke="#555" stroke-width="1.200"/><rect x="1.500" y="1.500" width="20" height="2.800" fill="url(#vt)"/><path d="M5 12C8 7.500 14 7.500 16 13" fill="none" stroke="#444" stroke-width="1.200"/><path d="M12.500 13L17.500 15.500L18.500 10Z" fill="#111"/></svg>
<div style="left:849px;top:237px;width:1px;height:27px;background:#9a9a9a;"></div>
<div style="left:850px;top:237px;width:1px;height:27px;background:#fff;"></div>
<svg style="left:858px;top:239.5px;" width="21" height="20" viewBox="0 0 21 20"><rect x="9" y="1" width="10" height="7.500" fill="#fff" stroke="#555" stroke-width="1.200"/><rect x="9.500" y="1.500" width="9" height="2" fill="#c8d4f0"/><rect x="1" y="11" width="11" height="8" fill="#fff" stroke="#555" stroke-width="1.200"/><path d="M14 17C17 17 17 15 17 12" fill="none" stroke="#6a5a1a" stroke-width="1.500"/><path d="M14.500 12.500L17 9L19.500 12.500Z" fill="#111"/></svg>
<svg style="left:889px;top:236px;" width="26" height="30" viewBox="0 0 26 30"><path d="M3 6L9.500 3L16 5.500V13L9.500 16L3 13.500Z M3 6L9.500 8.500L16 5.500M9.500 8.500V16" fill="#e8f2ff" stroke="#2a6cf0" stroke-width="1.200"/><path d="M6 12L18 23M17 12L6 22" stroke="#111" stroke-width="1.800"/><circle cx="5.500" cy="22.500" r="2" fill="#2a6cf0"/><circle cx="18" cy="23.500" r="2" fill="#2a6cf0"/><path d="M20 25H24L22 27.500Z" fill="#000"/></svg>
<svg style="left:400px;top:266px;overflow:hidden;" width="430" height="420" viewBox="0 0 430 420"><g transform="translate(-400,-266)"><path d="M465.6 461.5L568.8 290.3" stroke="#f2f2f2" stroke-width="1.100"/><path d="M475.3 465.8L578.4 294.9" stroke="#f2f2f2" stroke-width="1.100"/><path d="M486.0 470.1L588.7 299.8" stroke="#f2f2f2" stroke-width="1.100"/><path d="M492.5 474.0L595.6 303.1" stroke="#f2f2f2" stroke-width="1.100"/><path d="M505.4 480.4L608.6 309.3" stroke="#f2f2f2" stroke-width="1.100"/><path d="M519.3 487.7L622.8 316.1" stroke="#f2f2f2" stroke-width="1.100"/><path d="M537.6 496.3L641.0 324.8" stroke="#f2f2f2" stroke-width="1.100"/><path d="M573.1 514.2L677.0 341.9" stroke="#f2f2f2" stroke-width="1.100"/><path d="M568.8 290.3L677.0 341.9" stroke="#f2f2f2" stroke-width="1.100"/><path d="M792.500 623L828 566" stroke="#f2f2f2" stroke-width="1.200"/><g fill="none" stroke="#e01818" stroke-width="1.300"><path d="M451.600 456.100L582.800 519.600L657 400"/><path d="M672 400L600 515.300Q596 524 603 529L709.600 580.800Q714 582 716 577.600L826 400"/><path d="M832 402L716 585.100L830 641"/><path d="M431.200 493.800L830 683"/></g><g fill="none" stroke="#16e016" stroke-width="1.500"><path d="M446.200 466.900L507.500 497L500 511L436.600 480.900"/><path d="M830 654L512.900 498.500L504.700 512.700L830 671"/></g><g fill="none" stroke="#ff1a1a" stroke-width="3.200" stroke-dasharray="9 4"><path d="M495.700 431.600L830 531"/><path d="M597.800 400.400L830 466.400"/><path d="M541.900 380L518.300 375.700L495.700 431.600"/></g><text x="477" y="458" transform="rotate(-60 477 458)" font-family="Liberation Sans" font-size="7" font-weight='bold' fill="#e01818" letter-spacing="1">MB-1-T30</text><text x="583" y="492" transform="rotate(-60 583 492)" font-family="Liberation Sans" font-size="7" font-weight='bold' fill="#e01818" letter-spacing="1">MB-1-T35</text><text x="701" y="513" transform="rotate(0 701 513)" font-family="Liberation Sans" font-size="7" font-weight='bold' fill="#e01818" letter-spacing="1">MB-1-T38</text><text x="756" y="445" transform="rotate(0 756 445)" font-family="Liberation Sans" font-size="7" font-weight='bold' fill="#e01818" letter-spacing="1">MB-1-F38</text><text x="530" y="418" transform="rotate(-60 530 418)" font-family="Liberation Sans" font-size="6" font-weight='bold' fill="#e01818" letter-spacing="1">MB-1</text><text x="513" y="590" transform="rotate(0 513 590)" font-family="Liberation Sans" font-size="7" font-weight='bold' fill="#e01818" letter-spacing="1"></text><text x="510" y="408" transform="rotate(0 510 408)" font-family="Liberation Sans" font-size="5"  fill="#c02020" letter-spacing="1">1-5.4</text><text x="523" y="425" transform="rotate(0 523 425)" font-family="Liberation Sans" font-size="5"  fill="#c02020" letter-spacing="1">1-5.5</text><text x="548" y="432" transform="rotate(0 548 432)" font-family="Liberation Sans" font-size="5"  fill="#c02020" letter-spacing="1">1-5.5</text><text x="565" y="439" transform="rotate(0 565 439)" font-family="Liberation Sans" font-size="5"  fill="#c02020" letter-spacing="1">2-5.5</text><text x="593" y="449" transform="rotate(0 593 449)" font-family="Liberation Sans" font-size="5"  fill="#c02020" letter-spacing="1">3-5.5</text><text x="703" y="477" transform="rotate(0 703 477)" font-family="Liberation Sans" font-size="5"  fill="#c02020" letter-spacing="1">1-5.5</text><text x="703" y="491" transform="rotate(0 703 491)" font-family="Liberation Sans" font-size="5"  fill="#c02020" letter-spacing="1">1-5555</text><text x="786" y="540" transform="rotate(0 786 540)" font-family="Liberation Sans" font-size="5"  fill="#c02020" letter-spacing="1">1-5</text><path d="M600 419H622M612 413V419M610 416L615 419" stroke="#fff" stroke-width="1.100" fill="none"/><path d="M607 421.5H620" stroke="#ddd" stroke-width="1" stroke-dasharray="1.500 1"/><path d="M685 449H707M697 443V449M695 446L700 449" stroke="#fff" stroke-width="1.100" fill="none"/><path d="M692 451.5H705" stroke="#ddd" stroke-width="1" stroke-dasharray="1.500 1"/><path d="M624 417H646M636 411V417M634 414L639 417" stroke="#fff" stroke-width="1.100" fill="none"/><path d="M631 419.5H644" stroke="#ddd" stroke-width="1" stroke-dasharray="1.500 1"/><path d="M515 386H537M527 380V386M525 383L530 386" stroke="#fff" stroke-width="1.100" fill="none"/><path d="M522 388.5H535" stroke="#ddd" stroke-width="1" stroke-dasharray="1.500 1"/><path d="M568 404H590M580 398V404M578 401L583 404" stroke="#fff" stroke-width="1.100" fill="none"/><path d="M575 406.5H588" stroke="#ddd" stroke-width="1" stroke-dasharray="1.500 1"/><path d="M810 508H832M822 502V508M820 505L825 508" stroke="#fff" stroke-width="1.100" fill="none"/><path d="M817 510.5H830" stroke="#ddd" stroke-width="1" stroke-dasharray="1.500 1"/><path d="M629 431l3-4 2 4z M586 527l2-4 2 4z M712 458l2-3 2 3-2 3z M810 517l3-2-1 4z" fill="#fff"/><text x="602" y="540" transform="rotate(27 602 540)" font-family="Liberation Sans" font-size="6" fill="#ddd">1m 7456y</text></g></svg>
<svg style="left:1815px;top:500px;" width="150" height="340" viewBox="0 0 150 340"><g transform="translate(-1815,-500)"><path d="M1818 513L1952 629L1818 771" fill="none" stroke="#f2f2f2" stroke-width="1.200"/><path d="M1818 754L1860.300 766.200L1841.700 823.700L1818 817" fill="none" stroke="#ff1a1a" stroke-width="2.800" stroke-dasharray="8 4"/><text x="1867" y="765" transform="rotate(0 1867 765)" font-family="Liberation Sans" font-size="6" font-weight='bold' fill="#e01818" letter-spacing="1">MB-1-F38</text><text x="1846" y="830" transform="rotate(0 1846 830)" font-family="Liberation Sans" font-size="6" font-weight='bold' fill="#e01818" letter-spacing="1">MB-1-T38</text></g></svg>
<div style="left:528px;top:692px;width:2px;height:2px;background:#111;"></div>
<div style="left:541px;top:316px;width:288px;height:83.5px;background:#f0f0f0;box-shadow:0 0 0 1px rgba(90,100,100,.55), 2px 3px 8px rgba(0,0,0,.35);"></div>
<div style="left:541px;top:316px;width:288px;height:34px;background:#fff;"></div>
<svg style="left:549px;top:321px;" width="18" height="22" viewBox="0 0 18 22"><path d="M5 2C8 0 10 3 9 6C12 4 15 6 13 10C17 12 15 19 11 20C6 21 3 18 3 14C1 10 2 5 5 2Z" fill="#c9c9c9" stroke="#888" stroke-width="1"/><path d="M6 12C8 14 11 13 12 11" stroke="#fff" stroke-width="1.200" fill="none"/></svg>
<span class="t" style="left:575.74px;top:320.0px;font-size:17px;line-height:23px;color:#a3a3a3;transform:scaleX(1.0050);">Fit Vi...</span>
<div style="left:658px;top:332px;width:15px;height:1.3px;background:#8a8a8a;"></div>
<div style="left:723.5px;top:325.5px;width:13.5px;height:13px;border:1px solid #e2e2e2;"></div>
<svg style="left:789px;top:324px;" width="16" height="16" viewBox="0 0 16 16"><path d="M1.500 1.500L14.500 14.500M14.500 1.500L1.500 14.500" stroke="#777" stroke-width="1.200"/></svg>
<span class="t" style="left:585.79px;top:358.0px;font-size:16px;line-height:22px;color:#111;transform:scaleX(0.9718);"><u>F</u>iles:</span>
<div style="left:632px;top:358.5px;width:147.5px;height:20.5px;background:#e1e1e1;border:1px solid #8e8e8e;"></div>
<span class="t" style="left:637.00px;top:357.5px;font-size:16px;line-height:22px;color:#111;transform:scaleX(0.9552);">All</span>
<svg style="left:760px;top:365px;" width="11" height="6" viewBox="0 0 11 6"><path d="M0 0H11L5.500 6Z" fill="#000"/></svg>
<div style="left:912.5px;top:158.3px;width:1080px;height:178.7px;background:#e4effe;box-shadow:0 0 0 1px rgba(120,130,140,.5), 0 2px 10px rgba(0,0,0,.3);"></div>
<div style="left:913px;top:158.8px;width:1080px;height:41.5px;background:#fff;"></div>
<svg style="left:924px;top:167px;" width="24" height="24" viewBox="0 0 24 24"><defs><linearGradient id="gi" x1="0" y1="0" x2="1" y2="1"><stop offset="0" stop-color="#2a7aa8"/><stop offset="1" stop-color="#0a2644"/></linearGradient></defs><rect x="1" y="1" width="22" height="22" rx="3.500" fill="url(#gi)"/><path d="M4 19L10 6L12 14L18 4L19 13" fill="none" stroke="#9fe4ff" stroke-width="1.600"/><path d="M18 21L22 17V21Z" fill="#fff"/></svg>
<span class="t" style="left:954.24px;top:167.5px;font-size:17px;line-height:23px;color:#9a9a9a;transform:scaleX(1.0119);">gCadas - Xã Hà Ninh - Huyện Hà Trung - Thanh Hóa</span>
<div style="left:1874px;top:178px;width:14px;height:1.3px;background:#9a9a9a;"></div>
<div style="left:1939px;top:172px;width:14px;height:13px;border:1px solid #ececec;"></div>
<div style="left:913px;top:200px;width:1080px;height:33px;background:#c6defc;"></div>
<span class="t" style="left:924.65px;top:206.8px;font-size:17px;line-height:23px;color:#111;transform:scaleX(1.0787);">Hệ thống</span>
<span class="t" style="left:1019.74px;top:206.8px;font-size:17px;line-height:23px;color:#111;transform:scaleX(1.0096);">Bản đồ</span>
<span class="t" style="left:1094.76px;top:206.8px;font-size:17px;line-height:23px;color:#111;transform:scaleX(0.9888);">Hồ sơ</span>
<span class="t" style="left:1162.28px;top:206.8px;font-size:17px;line-height:23px;color:#111;transform:scaleX(0.9635);">Cơ sở dữ liệu</span>
<span class="t" style="left:1283.28px;top:206.8px;font-size:17px;line-height:23px;color:#111;transform:scaleX(0.9643);">Cơ sở dữ liệu TT75</span>
<span class="t" style="left:1446.70px;top:206.8px;font-size:17px;line-height:23px;color:#111;transform:scaleX(1.0370);">Biến động</span>
<span class="t" style="left:1547.21px;top:206.8px;font-size:17px;line-height:23px;color:#111;transform:scaleX(1.0488);">Công cụ</span>
<span class="t" style="left:1633.74px;top:206.8px;font-size:17px;line-height:23px;color:#111;transform:scaleX(1.0084);">Kiểm kê</span>
<span class="t" style="left:1717.75px;top:206.8px;font-size:17px;line-height:23px;color:#111;transform:scaleX(0.9841);">Thống kê cấp xã</span>
<span class="t" style="left:1863.75px;top:206.8px;font-size:17px;line-height:23px;color:#111;transform:scaleX(1.0000);">Trợ giúp</span>
<span class="t" style="left:1947.63px;top:206.8px;font-size:17px;line-height:23px;color:#111;transform:scaleX(1.0980);">Pl</span>
<div style="left:913px;top:300.5px;width:1080px;height:35.5px;background:#c2ddfd;"></div>
<div style="left:828.7px;top:299px;width:990.6px;height:615px;background:#e4effe;box-shadow:0 0 0 1px rgba(110,120,130,.6), 0 4px 14px rgba(0,0,0,.45);"></div>
<div style="left:829px;top:299.3px;width:990px;height:40.5px;background:#fff;"></div>
<span class="t" style="left:840.75px;top:308.0px;font-size:17px;line-height:23px;color:#8c8c8c;transform:scaleX(0.9923);">Tạo thửa đất</span>
<svg style="left:1789px;top:311px;" width="16" height="16" viewBox="0 0 16 16"><path d="M1 1L15 15M15 1L1 15" stroke="#8a8a8a" stroke-width="1.200"/></svg>
<div style="left:845.5px;top:357px;width:564.0px;height:541.6px;background:#e4effe;border:1px solid #7da2dd;box-shadow:inset 0 0 0 1px #f4f8ff;"></div>
<div style="left:846.5px;top:358px;width:562.0px;height:25.30000000000001px;background:linear-gradient(#e3eefc,#cfe1fb 50%,#b2d0fb);border-bottom:1px solid #8fb2e6;"></div>
<span class="t" style="left:861.23px;top:361.1px;font-size:15px;line-height:21px;color:#1e3c78;transform:scaleX(1.0291);">Các lớp tạo thừa</span>
<div style="left:848.6px;top:385.8px;width:557.7px;height:509px;background:#fff;border:1px solid #9cbbe8;"></div>
<div style="left:849.5px;top:387.4px;width:115px;height:22.4px;background:#316ac5;"></div>
<div style="left:853.8px;top:391.25px;width:16.5px;height:16.5px;background:linear-gradient(135deg,#cdd1d9,#f0f1f4 55%,#fbfbfc);border:1px solid #a8bce0;box-shadow:inset 0 0 0 2px #f7f9fd, inset 0 0 0 3px #c9cfdb;"></div>
<span class="t" style="left:877.11px;top:389.0px;font-size:16px;line-height:22px;color:#fff;font-weight:bold;transform:scaleX(1.0900);">Level 1</span>
<div style="left:853.8px;top:414.58px;width:16.5px;height:16.5px;background:linear-gradient(135deg,#cdd1d9,#f0f1f4 55%,#fbfbfc);border:1px solid #a8bce0;box-shadow:inset 0 0 0 2px #f7f9fd, inset 0 0 0 3px #c9cfdb;"></div>
<span class="t" style="left:877.10px;top:412.3px;font-size:16px;line-height:22px;color:#000;font-weight:bold;transform:scaleX(1.0952);">Level 2</span>
<div style="left:853.8px;top:437.90999999999997px;width:16.5px;height:16.5px;background:linear-gradient(135deg,#cdd1d9,#f0f1f4 55%,#fbfbfc);border:1px solid #a8bce0;box-shadow:inset 0 0 0 2px #f7f9fd, inset 0 0 0 3px #c9cfdb;"></div>
<span class="t" style="left:876.97px;top:435.7px;font-size:16px;line-height:22px;color:#000;transform:scaleX(0.9849);">Level 3</span>
<div style="left:853.8px;top:461.24px;width:16.5px;height:16.5px;background:linear-gradient(135deg,#cdd1d9,#f0f1f4 55%,#fbfbfc);border:1px solid #a8bce0;box-shadow:inset 0 0 0 2px #f7f9fd, inset 0 0 0 3px #c9cfdb;"></div>
<span class="t" style="left:877.12px;top:459.0px;font-size:16px;line-height:22px;color:#000;font-weight:bold;transform:scaleX(1.0798);">Level 4</span>
<div style="left:853.8px;top:484.57px;width:16.5px;height:16.5px;background:linear-gradient(135deg,#cdd1d9,#f0f1f4 55%,#fbfbfc);border:1px solid #a8bce0;box-shadow:inset 0 0 0 2px #f7f9fd, inset 0 0 0 3px #c9cfdb;"></div>
<span class="t" style="left:877.11px;top:482.3px;font-size:16px;line-height:22px;color:#000;font-weight:bold;transform:scaleX(1.0900);">Level 5</span>
<div style="left:853.8px;top:507.9px;width:16.5px;height:16.5px;background:linear-gradient(135deg,#cdd1d9,#f0f1f4 55%,#fbfbfc);border:1px solid #a8bce0;box-shadow:inset 0 0 0 2px #f7f9fd, inset 0 0 0 3px #c9cfdb;"></div>
<span class="t" style="left:876.97px;top:505.6px;font-size:16px;line-height:22px;color:#000;transform:scaleX(0.9849);">Level 6</span>
<div style="left:853.8px;top:531.23px;width:16.5px;height:16.5px;background:linear-gradient(135deg,#cdd1d9,#f0f1f4 55%,#fbfbfc);border:1px solid #a8bce0;box-shadow:inset 0 0 0 2px #f7f9fd, inset 0 0 0 3px #c9cfdb;"></div>
<span class="t" style="left:876.97px;top:529.0px;font-size:16px;line-height:22px;color:#000;transform:scaleX(0.9849);">Level 7</span>
<div style="left:853.8px;top:554.56px;width:16.5px;height:16.5px;background:linear-gradient(135deg,#cdd1d9,#f0f1f4 55%,#fbfbfc);border:1px solid #a8bce0;box-shadow:inset 0 0 0 2px #f7f9fd, inset 0 0 0 3px #c9cfdb;"></div>
<span class="t" style="left:876.97px;top:552.3px;font-size:16px;line-height:22px;color:#000;transform:scaleX(0.9849);">Level 8</span>
<div style="left:853.8px;top:577.89px;width:16.5px;height:16.5px;background:linear-gradient(135deg,#cdd1d9,#f0f1f4 55%,#fbfbfc);border:1px solid #a8bce0;box-shadow:inset 0 0 0 2px #f7f9fd, inset 0 0 0 3px #c9cfdb;"></div>
<span class="t" style="left:876.97px;top:575.6px;font-size:16px;line-height:22px;color:#000;transform:scaleX(0.9849);">Level 9</span>
<div style="left:853.8px;top:601.22px;width:16.5px;height:16.5px;background:linear-gradient(135deg,#cdd1d9,#f0f1f4 55%,#fbfbfc);border:1px solid #a8bce0;box-shadow:inset 0 0 0 2px #f7f9fd, inset 0 0 0 3px #c9cfdb;"></div>
<svg style="left:856.8px;top:604.22px;" width="11" height="11" viewBox="0 0 11 11"><path d="M1.500 4.500L4.500 9.500L9.500 0.500" fill="none" stroke="#4566a3" stroke-width="2.400"/></svg>
<span class="t" style="left:877.09px;top:599.0px;font-size:16px;line-height:22px;color:#000;font-weight:bold;transform:scaleX(1.1057);">Level 10</span>
<div style="left:853.8px;top:624.55px;width:16.5px;height:16.5px;background:linear-gradient(135deg,#cdd1d9,#f0f1f4 55%,#fbfbfc);border:1px solid #a8bce0;box-shadow:inset 0 0 0 2px #f7f9fd, inset 0 0 0 3px #c9cfdb;"></div>
<span class="t" style="left:877.09px;top:622.3px;font-size:16px;line-height:22px;color:#000;font-weight:bold;transform:scaleX(1.1148);">Level 11</span>
<div style="left:853.8px;top:647.88px;width:16.5px;height:16.5px;background:linear-gradient(135deg,#cdd1d9,#f0f1f4 55%,#fbfbfc);border:1px solid #a8bce0;box-shadow:inset 0 0 0 2px #f7f9fd, inset 0 0 0 3px #c9cfdb;"></div>
<span class="t" style="left:876.95px;top:645.6px;font-size:16px;line-height:22px;color:#000;transform:scaleX(1.0000);">Level 12</span>
<div style="left:853.8px;top:671.21px;width:16.5px;height:16.5px;background:linear-gradient(135deg,#cdd1d9,#f0f1f4 55%,#fbfbfc);border:1px solid #a8bce0;box-shadow:inset 0 0 0 2px #f7f9fd, inset 0 0 0 3px #c9cfdb;"></div>
<span class="t" style="left:877.10px;top:669.0px;font-size:16px;line-height:22px;color:#000;font-weight:bold;transform:scaleX(1.1012);">Level 13</span>
<div style="left:853.8px;top:694.54px;width:16.5px;height:16.5px;background:linear-gradient(135deg,#cdd1d9,#f0f1f4 55%,#fbfbfc);border:1px solid #a8bce0;box-shadow:inset 0 0 0 2px #f7f9fd, inset 0 0 0 3px #c9cfdb;"></div>
<span class="t" style="left:876.96px;top:692.3px;font-size:16px;line-height:22px;color:#000;transform:scaleX(0.9957);">Level 14</span>
<div style="left:853.8px;top:717.87px;width:16.5px;height:16.5px;background:linear-gradient(135deg,#cdd1d9,#f0f1f4 55%,#fbfbfc);border:1px solid #a8bce0;box-shadow:inset 0 0 0 2px #f7f9fd, inset 0 0 0 3px #c9cfdb;"></div>
<span class="t" style="left:876.95px;top:715.6px;font-size:16px;line-height:22px;color:#000;transform:scaleX(1.0000);">Level 15</span>
<div style="left:853.8px;top:741.2px;width:16.5px;height:16.5px;background:linear-gradient(135deg,#cdd1d9,#f0f1f4 55%,#fbfbfc);border:1px solid #a8bce0;box-shadow:inset 0 0 0 2px #f7f9fd, inset 0 0 0 3px #c9cfdb;"></div>
<span class="t" style="left:876.95px;top:739.0px;font-size:16px;line-height:22px;color:#000;transform:scaleX(1.0000);">Level 16</span>
<div style="left:853.8px;top:764.53px;width:16.5px;height:16.5px;background:linear-gradient(135deg,#cdd1d9,#f0f1f4 55%,#fbfbfc);border:1px solid #a8bce0;box-shadow:inset 0 0 0 2px #f7f9fd, inset 0 0 0 3px #c9cfdb;"></div>
<span class="t" style="left:876.95px;top:762.3px;font-size:16px;line-height:22px;color:#000;transform:scaleX(1.0000);">Level 17</span>
<div style="left:853.8px;top:787.8599999999999px;width:16.5px;height:16.5px;background:linear-gradient(135deg,#cdd1d9,#f0f1f4 55%,#fbfbfc);border:1px solid #a8bce0;box-shadow:inset 0 0 0 2px #f7f9fd, inset 0 0 0 3px #c9cfdb;"></div>
<span class="t" style="left:876.95px;top:785.6px;font-size:16px;line-height:22px;color:#000;transform:scaleX(1.0000);">Level 18</span>
<div style="left:853.8px;top:811.1899999999999px;width:16.5px;height:16.5px;background:linear-gradient(135deg,#cdd1d9,#f0f1f4 55%,#fbfbfc);border:1px solid #a8bce0;box-shadow:inset 0 0 0 2px #f7f9fd, inset 0 0 0 3px #c9cfdb;"></div>
<span class="t" style="left:876.95px;top:808.9px;font-size:16px;line-height:22px;color:#000;transform:scaleX(1.0000);">Level 19</span>
<div style="left:853.8px;top:834.52px;width:16.5px;height:16.5px;background:linear-gradient(135deg,#cdd1d9,#f0f1f4 55%,#fbfbfc);border:1px solid #a8bce0;box-shadow:inset 0 0 0 2px #f7f9fd, inset 0 0 0 3px #c9cfdb;"></div>
<span class="t" style="left:876.95px;top:832.3px;font-size:16px;line-height:22px;color:#000;transform:scaleX(1.0000);">Level 20</span>
<div style="left:853.8px;top:857.8499999999999px;width:16.5px;height:16.5px;background:linear-gradient(135deg,#cdd1d9,#f0f1f4 55%,#fbfbfc);border:1px solid #a8bce0;box-shadow:inset 0 0 0 2px #f7f9fd, inset 0 0 0 3px #c9cfdb;"></div>
<span class="t" style="left:876.95px;top:855.6px;font-size:16px;line-height:22px;color:#000;transform:scaleX(1.0000);">Level 21</span>
<div style="left:969.8px;top:391.25px;width:16.5px;height:16.5px;background:linear-gradient(135deg,#cdd1d9,#f0f1f4 55%,#fbfbfc);border:1px solid #a8bce0;box-shadow:inset 0 0 0 2px #f7f9fd, inset 0 0 0 3px #c9cfdb;"></div>
<span class="t" style="left:992.49px;top:389.0px;font-size:16px;line-height:22px;color:#000;font-weight:bold;transform:scaleX(1.1057);">Level 22</span>
<div style="left:969.8px;top:414.58px;width:16.5px;height:16.5px;background:linear-gradient(135deg,#cdd1d9,#f0f1f4 55%,#fbfbfc);border:1px solid #a8bce0;box-shadow:inset 0 0 0 2px #f7f9fd, inset 0 0 0 3px #c9cfdb;"></div>
<svg style="left:972.8px;top:417.58px;" width="11" height="11" viewBox="0 0 11 11"><path d="M1.500 4.500L4.500 9.500L9.500 0.500" fill="none" stroke="#4566a3" stroke-width="2.400"/></svg>
<span class="t" style="left:992.50px;top:412.3px;font-size:16px;line-height:22px;color:#000;font-weight:bold;transform:scaleX(1.1012);">Level 23</span>
<div style="left:969.8px;top:437.90999999999997px;width:16.5px;height:16.5px;background:linear-gradient(135deg,#cdd1d9,#f0f1f4 55%,#fbfbfc);border:1px solid #a8bce0;box-shadow:inset 0 0 0 2px #f7f9fd, inset 0 0 0 3px #c9cfdb;"></div>
<span class="t" style="left:992.36px;top:435.7px;font-size:16px;line-height:22px;color:#000;transform:scaleX(0.9957);">Level 24</span>
<div style="left:969.8px;top:461.24px;width:16.5px;height:16.5px;background:linear-gradient(135deg,#cdd1d9,#f0f1f4 55%,#fbfbfc);border:1px solid #a8bce0;box-shadow:inset 0 0 0 2px #f7f9fd, inset 0 0 0 3px #c9cfdb;"></div>
<span class="t" style="left:992.35px;top:459.0px;font-size:16px;line-height:22px;color:#000;transform:scaleX(1.0000);">Level 25</span>
<div style="left:969.8px;top:484.57px;width:16.5px;height:16.5px;background:linear-gradient(135deg,#cdd1d9,#f0f1f4 55%,#fbfbfc);border:1px solid #a8bce0;box-shadow:inset 0 0 0 2px #f7f9fd, inset 0 0 0 3px #c9cfdb;"></div>
<span class="t" style="left:992.35px;top:482.3px;font-size:16px;line-height:22px;color:#000;transform:scaleX(1.0000);">Level 26</span>
<div style="left:969.8px;top:507.9px;width:16.5px;height:16.5px;background:linear-gradient(135deg,#cdd1d9,#f0f1f4 55%,#fbfbfc);border:1px solid #a8bce0;box-shadow:inset 0 0 0 2px #f7f9fd, inset 0 0 0 3px #c9cfdb;"></div>
<span class="t" style="left:992.35px;top:505.6px;font-size:16px;line-height:22px;color:#000;transform:scaleX(1.0000);">Level 27</span>
<div style="left:969.8px;top:531.23px;width:16.5px;height:16.5px;background:linear-gradient(135deg,#cdd1d9,#f0f1f4 55%,#fbfbfc);border:1px solid #a8bce0;box-shadow:inset 0 0 0 2px #f7f9fd, inset 0 0 0 3px #c9cfdb;"></div>
<span class="t" style="left:992.35px;top:529.0px;font-size:16px;line-height:22px;color:#000;transform:scaleX(1.0000);">Level 28</span>
<div style="left:969.8px;top:554.56px;width:16.5px;height:16.5px;background:linear-gradient(135deg,#cdd1d9,#f0f1f4 55%,#fbfbfc);border:1px solid #a8bce0;box-shadow:inset 0 0 0 2px #f7f9fd, inset 0 0 0 3px #c9cfdb;"></div>
<span class="t" style="left:992.35px;top:552.3px;font-size:16px;line-height:22px;color:#000;transform:scaleX(1.0000);">Level 29</span>
<div style="left:969.8px;top:577.89px;width:16.5px;height:16.5px;background:linear-gradient(135deg,#cdd1d9,#f0f1f4 55%,#fbfbfc);border:1px solid #a8bce0;box-shadow:inset 0 0 0 2px #f7f9fd, inset 0 0 0 3px #c9cfdb;"></div>
<span class="t" style="left:992.35px;top:575.6px;font-size:16px;line-height:22px;color:#000;transform:scaleX(1.0000);">Level 30</span>
<div style="left:969.8px;top:601.22px;width:16.5px;height:16.5px;background:linear-gradient(135deg,#cdd1d9,#f0f1f4 55%,#fbfbfc);border:1px solid #a8bce0;box-shadow:inset 0 0 0 2px #f7f9fd, inset 0 0 0 3px #c9cfdb;"></div>
<span class="t" style="left:992.35px;top:599.0px;font-size:16px;line-height:22px;color:#000;transform:scaleX(1.0000);">Level 31</span>
<div style="left:969.8px;top:624.55px;width:16.5px;height:16.5px;background:linear-gradient(135deg,#cdd1d9,#f0f1f4 55%,#fbfbfc);border:1px solid #a8bce0;box-shadow:inset 0 0 0 2px #f7f9fd, inset 0 0 0 3px #c9cfdb;"></div>
<svg style="left:972.8px;top:627.55px;" width="11" height="11" viewBox="0 0 11 11"><path d="M1.500 4.500L4.500 9.500L9.500 0.500" fill="none" stroke="#4566a3" stroke-width="2.400"/></svg>
<span class="t" style="left:992.49px;top:622.3px;font-size:16px;line-height:22px;color:#000;font-weight:bold;transform:scaleX(1.1057);">Level 32</span>
<div style="left:969.8px;top:647.88px;width:16.5px;height:16.5px;background:linear-gradient(135deg,#cdd1d9,#f0f1f4 55%,#fbfbfc);border:1px solid #a8bce0;box-shadow:inset 0 0 0 2px #f7f9fd, inset 0 0 0 3px #c9cfdb;"></div>
<span class="t" style="left:992.35px;top:645.6px;font-size:16px;line-height:22px;color:#000;transform:scaleX(1.0000);">Level 33</span>
<div style="left:969.8px;top:671.21px;width:16.5px;height:16.5px;background:linear-gradient(135deg,#cdd1d9,#f0f1f4 55%,#fbfbfc);border:1px solid #a8bce0;box-shadow:inset 0 0 0 2px #f7f9fd, inset 0 0 0 3px #c9cfdb;"></div>
<span class="t" style="left:992.36px;top:669.0px;font-size:16px;line-height:22px;color:#000;transform:scaleX(0.9957);">Level 34</span>
<div style="left:969.8px;top:694.54px;width:16.5px;height:16.5px;background:linear-gradient(135deg,#cdd1d9,#f0f1f4 55%,#fbfbfc);border:1px solid #a8bce0;box-shadow:inset 0 0 0 2px #f7f9fd, inset 0 0 0 3px #c9cfdb;"></div>
<span class="t" style="left:992.35px;top:692.3px;font-size:16px;line-height:22px;color:#000;transform:scaleX(1.0000);">Level 35</span>
<div style="left:969.8px;top:717.87px;width:16.5px;height:16.5px;background:linear-gradient(135deg,#cdd1d9,#f0f1f4 55%,#fbfbfc);border:1px solid #a8bce0;box-shadow:inset 0 0 0 2px #f7f9fd, inset 0 0 0 3px #c9cfdb;"></div>
<span class="t" style="left:992.35px;top:715.6px;font-size:16px;line-height:22px;color:#000;transform:scaleX(1.0000);">Level 36</span>
<div style="left:969.8px;top:741.2px;width:16.5px;height:16.5px;background:linear-gradient(135deg,#cdd1d9,#f0f1f4 55%,#fbfbfc);border:1px solid #a8bce0;box-shadow:inset 0 0 0 2px #f7f9fd, inset 0 0 0 3px #c9cfdb;"></div>
<span class="t" style="left:992.35px;top:739.0px;font-size:16px;line-height:22px;color:#000;transform:scaleX(1.0000);">Level 37</span>
<div style="left:969.8px;top:764.53px;width:16.5px;height:16.5px;background:linear-gradient(135deg,#cdd1d9,#f0f1f4 55%,#fbfbfc);border:1px solid #a8bce0;box-shadow:inset 0 0 0 2px #f7f9fd, inset 0 0 0 3px #c9cfdb;"></div>
<span class="t" style="left:992.35px;top:762.3px;font-size:16px;line-height:22px;color:#000;transform:scaleX(1.0000);">Level 38</span>
<div style="left:969.8px;top:787.8599999999999px;width:16.5px;height:16.5px;background:linear-gradient(135deg,#cdd1d9,#f0f1f4 55%,#fbfbfc);border:1px solid #a8bce0;box-shadow:inset 0 0 0 2px #f7f9fd, inset 0 0 0 3px #c9cfdb;"></div>
<span class="t" style="left:992.35px;top:785.6px;font-size:16px;line-height:22px;color:#000;transform:scaleX(1.0000);">Level 39</span>
<div style="left:969.8px;top:811.1899999999999px;width:16.5px;height:16.5px;background:linear-gradient(135deg,#cdd1d9,#f0f1f4 55%,#fbfbfc);border:1px solid #a8bce0;box-shadow:inset 0 0 0 2px #f7f9fd, inset 0 0 0 3px #c9cfdb;"></div>
<span class="t" style="left:992.35px;top:808.9px;font-size:16px;line-height:22px;color:#000;transform:scaleX(1.0000);">Level 40</span>
<div style="left:969.8px;top:834.52px;width:16.5px;height:16.5px;background:linear-gradient(135deg,#cdd1d9,#f0f1f4 55%,#fbfbfc);border:1px solid #a8bce0;box-shadow:inset 0 0 0 2px #f7f9fd, inset 0 0 0 3px #c9cfdb;"></div>
<span class="t" style="left:992.35px;top:832.3px;font-size:16px;line-height:22px;color:#000;transform:scaleX(1.0000);">Level 41</span>
<div style="left:969.8px;top:857.8499999999999px;width:16.5px;height:16.5px;background:linear-gradient(135deg,#cdd1d9,#f0f1f4 55%,#fbfbfc);border:1px solid #a8bce0;box-shadow:inset 0 0 0 2px #f7f9fd, inset 0 0 0 3px #c9cfdb;"></div>
<span class="t" style="left:992.35px;top:855.6px;font-size:16px;line-height:22px;color:#000;transform:scaleX(1.0000);">Level 42</span>
<div style="left:1085.8px;top:391.25px;width:16.5px;height:16.5px;background:linear-gradient(135deg,#cdd1d9,#f0f1f4 55%,#fbfbfc);border:1px solid #a8bce0;box-shadow:inset 0 0 0 2px #f7f9fd, inset 0 0 0 3px #c9cfdb;"></div>
<span class="t" style="left:1108.05px;top:389.0px;font-size:16px;line-height:22px;color:#000;transform:scaleX(1.0000);">Level 43</span>
<div style="left:1085.8px;top:414.58px;width:16.5px;height:16.5px;background:linear-gradient(135deg,#cdd1d9,#f0f1f4 55%,#fbfbfc);border:1px solid #a8bce0;box-shadow:inset 0 0 0 2px #f7f9fd, inset 0 0 0 3px #c9cfdb;"></div>
<span class="t" style="left:1108.06px;top:412.3px;font-size:16px;line-height:22px;color:#000;transform:scaleX(0.9957);">Level 44</span>
<div style="left:1085.8px;top:437.90999999999997px;width:16.5px;height:16.5px;background:linear-gradient(135deg,#cdd1d9,#f0f1f4 55%,#fbfbfc);border:1px solid #a8bce0;box-shadow:inset 0 0 0 2px #f7f9fd, inset 0 0 0 3px #c9cfdb;"></div>
<span class="t" style="left:1108.05px;top:435.7px;font-size:16px;line-height:22px;color:#000;transform:scaleX(1.0000);">Level 45</span>
<div style="left:1085.8px;top:461.24px;width:16.5px;height:16.5px;background:linear-gradient(135deg,#cdd1d9,#f0f1f4 55%,#fbfbfc);border:1px solid #a8bce0;box-shadow:inset 0 0 0 2px #f7f9fd, inset 0 0 0 3px #c9cfdb;"></div>
<span class="t" style="left:1108.05px;top:459.0px;font-size:16px;line-height:22px;color:#000;transform:scaleX(1.0000);">Level 46</span>
<div style="left:1085.8px;top:484.57px;width:16.5px;height:16.5px;background:linear-gradient(135deg,#cdd1d9,#f0f1f4 55%,#fbfbfc);border:1px solid #a8bce0;box-shadow:inset 0 0 0 2px #f7f9fd, inset 0 0 0 3px #c9cfdb;"></div>
<span class="t" style="left:1108.05px;top:482.3px;font-size:16px;line-height:22px;color:#000;transform:scaleX(1.0000);">Level 47</span>
<div style="left:1085.8px;top:507.9px;width:16.5px;height:16.5px;background:linear-gradient(135deg,#cdd1d9,#f0f1f4 55%,#fbfbfc);border:1px solid #a8bce0;box-shadow:inset 0 0 0 2px #f7f9fd, inset 0 0 0 3px #c9cfdb;"></div>
<span class="t" style="left:1108.05px;top:505.6px;font-size:16px;line-height:22px;color:#000;transform:scaleX(1.0000);">Level 48</span>
<div style="left:1085.8px;top:531.23px;width:16.5px;height:16.5px;background:linear-gradient(135deg,#cdd1d9,#f0f1f4 55%,#fbfbfc);border:1px solid #a8bce0;box-shadow:inset 0 0 0 2px #f7f9fd, inset 0 0 0 3px #c9cfdb;"></div>
<span class="t" style="left:1108.19px;top:529.0px;font-size:16px;line-height:22px;color:#000;font-weight:bold;transform:scaleX(1.1057);">Level 49</span>
<div style="left:1085.8px;top:554.56px;width:16.5px;height:16.5px;background:linear-gradient(135deg,#cdd1d9,#f0f1f4 55%,#fbfbfc);border:1px solid #a8bce0;box-shadow:inset 0 0 0 2px #f7f9fd, inset 0 0 0 3px #c9cfdb;"></div>
<span class="t" style="left:1108.19px;top:552.3px;font-size:16px;line-height:22px;color:#000;font-weight:bold;transform:scaleX(1.1057);">Level 50</span>
<div style="left:1085.8px;top:577.89px;width:16.5px;height:16.5px;background:linear-gradient(135deg,#cdd1d9,#f0f1f4 55%,#fbfbfc);border:1px solid #a8bce0;box-shadow:inset 0 0 0 2px #f7f9fd, inset 0 0 0 3px #c9cfdb;"></div>
<span class="t" style="left:1108.05px;top:575.6px;font-size:16px;line-height:22px;color:#000;transform:scaleX(1.0000);">Level 51</span>
<div style="left:1085.8px;top:601.22px;width:16.5px;height:16.5px;background:linear-gradient(135deg,#cdd1d9,#f0f1f4 55%,#fbfbfc);border:1px solid #a8bce0;box-shadow:inset 0 0 0 2px #f7f9fd, inset 0 0 0 3px #c9cfdb;"></div>
<span class="t" style="left:1108.05px;top:599.0px;font-size:16px;line-height:22px;color:#000;transform:scaleX(1.0000);">Level 52</span>
<div style="left:1085.8px;top:624.55px;width:16.5px;height:16.5px;background:linear-gradient(135deg,#cdd1d9,#f0f1f4 55%,#fbfbfc);border:1px solid #a8bce0;box-shadow:inset 0 0 0 2px #f7f9fd, inset 0 0 0 3px #c9cfdb;"></div>
<span class="t" style="left:1108.05px;top:622.3px;font-size:16px;line-height:22px;color:#000;transform:scaleX(1.0000);">Level 53</span>
<div style="left:1085.8px;top:647.88px;width:16.5px;height:16.5px;background:linear-gradient(135deg,#cdd1d9,#f0f1f4 55%,#fbfbfc);border:1px solid #a8bce0;box-shadow:inset 0 0 0 2px #f7f9fd, inset 0 0 0 3px #c9cfdb;"></div>
<span class="t" style="left:1108.06px;top:645.6px;font-size:16px;line-height:22px;color:#000;transform:scaleX(0.9957);">Level 54</span>
<div style="left:1085.8px;top:671.21px;width:16.5px;height:16.5px;background:linear-gradient(135deg,#cdd1d9,#f0f1f4 55%,#fbfbfc);border:1px solid #a8bce0;box-shadow:inset 0 0 0 2px #f7f9fd, inset 0 0 0 3px #c9cfdb;"></div>
<span class="t" style="left:1108.05px;top:669.0px;font-size:16px;line-height:22px;color:#000;transform:scaleX(1.0000);">Level 55</span>
<div style="left:1085.8px;top:694.54px;width:16.5px;height:16.5px;background:linear-gradient(135deg,#cdd1d9,#f0f1f4 55%,#fbfbfc);border:1px solid #a8bce0;box-shadow:inset 0 0 0 2px #f7f9fd, inset 0 0 0 3px #c9cfdb;"></div>
<span class="t" style="left:1108.05px;top:692.3px;font-size:16px;line-height:22px;color:#000;transform:scaleX(1.0000);">Level 56</span>
<div style="left:1085.8px;top:717.87px;width:16.5px;height:16.5px;background:linear-gradient(135deg,#cdd1d9,#f0f1f4 55%,#fbfbfc);border:1px solid #a8bce0;box-shadow:inset 0 0 0 2px #f7f9fd, inset 0 0 0 3px #c9cfdb;"></div>
<span class="t" style="left:1108.05px;top:715.6px;font-size:16px;line-height:22px;color:#000;transform:scaleX(1.0000);">Level 57</span>
<div style="left:1085.8px;top:741.2px;width:16.5px;height:16.5px;background:linear-gradient(135deg,#cdd1d9,#f0f1f4 55%,#fbfbfc);border:1px solid #a8bce0;box-shadow:inset 0 0 0 2px #f7f9fd, inset 0 0 0 3px #c9cfdb;"></div>
<span class="t" style="left:1108.05px;top:739.0px;font-size:16px;line-height:22px;color:#000;transform:scaleX(1.0000);">Level 58</span>
<div style="left:1085.8px;top:764.53px;width:16.5px;height:16.5px;background:linear-gradient(135deg,#cdd1d9,#f0f1f4 55%,#fbfbfc);border:1px solid #a8bce0;box-shadow:inset 0 0 0 2px #f7f9fd, inset 0 0 0 3px #c9cfdb;"></div>
<span class="t" style="left:1108.05px;top:762.3px;font-size:16px;line-height:22px;color:#000;transform:scaleX(1.0000);">Level 59</span>
<div style="left:1085.8px;top:787.8599999999999px;width:16.5px;height:16.5px;background:linear-gradient(135deg,#cdd1d9,#f0f1f4 55%,#fbfbfc);border:1px solid #a8bce0;box-shadow:inset 0 0 0 2px #f7f9fd, inset 0 0 0 3px #c9cfdb;"></div>
<span class="t" style="left:1108.05px;top:785.6px;font-size:16px;line-height:22px;color:#000;transform:scaleX(1.0000);">Level 60</span>
<div style="left:1085.8px;top:811.1899999999999px;width:16.5px;height:16.5px;background:linear-gradient(135deg,#cdd1d9,#f0f1f4 55%,#fbfbfc);border:1px solid #a8bce0;box-shadow:inset 0 0 0 2px #f7f9fd, inset 0 0 0 3px #c9cfdb;"></div>
<span class="t" style="left:1108.05px;top:808.9px;font-size:16px;line-height:22px;color:#000;transform:scaleX(1.0000);">Level 61</span>
<div style="left:1085.8px;top:834.52px;width:16.5px;height:16.5px;background:linear-gradient(135deg,#cdd1d9,#f0f1f4 55%,#fbfbfc);border:1px solid #a8bce0;box-shadow:inset 0 0 0 2px #f7f9fd, inset 0 0 0 3px #c9cfdb;"></div>
<span class="t" style="left:1108.05px;top:832.3px;font-size:16px;line-height:22px;color:#000;transform:scaleX(1.0000);">Level 62</span>
<div style="left:1085.8px;top:857.8499999999999px;width:16.5px;height:16.5px;background:linear-gradient(135deg,#cdd1d9,#f0f1f4 55%,#fbfbfc);border:1px solid #a8bce0;box-shadow:inset 0 0 0 2px #f7f9fd, inset 0 0 0 3px #c9cfdb;"></div>
<span class="t" style="left:1108.05px;top:855.6px;font-size:16px;line-height:22px;color:#000;transform:scaleX(1.0000);">Level 63</span>
<div style="left:1201.8px;top:391.25px;width:16.5px;height:16.5px;background:linear-gradient(135deg,#cdd1d9,#f0f1f4 55%,#fbfbfc);border:1px solid #a8bce0;box-shadow:inset 0 0 0 2px #f7f9fd, inset 0 0 0 3px #c9cfdb;"></div>
<span class="t" style="left:1224.88px;top:388.5px;font-size:16px;line-height:22px;color:#000;font-weight:bold;transform:scaleX(1.1192);">Default</span>
<div style="left:1201.8px;top:414.58px;width:16.5px;height:16.5px;background:linear-gradient(135deg,#cdd1d9,#f0f1f4 55%,#fbfbfc);border:1px solid #a8bce0;box-shadow:inset 0 0 0 2px #f7f9fd, inset 0 0 0 3px #c9cfdb;"></div>
<span class="t" style="left:1225.50px;top:411.8px;font-size:16px;line-height:22px;color:#000;font-weight:bold;transform:scaleX(1.0000);">GPMB1</span>
<div style="left:961px;top:412.2px;width:110px;height:26.5px;border:3.5px solid #ec1c24;"></div>
<div style="left:850.5px;top:594.8px;width:101.70000000000005px;height:28.0px;border:3.5px solid #ec1c24;"></div>
<div style="left:961px;top:616.4px;width:110px;height:30.200000000000045px;border:3.5px solid #ec1c24;"></div>
<div style="left:1419.3px;top:357px;width:381.29999999999995px;height:342.29999999999995px;background:#e4effe;border:1px solid #7da2dd;box-shadow:inset 0 0 0 1px #f4f8ff;"></div>
<div style="left:1420.3px;top:358px;width:379.29999999999995px;height:25.30000000000001px;background:linear-gradient(#e3eefc,#cfe1fb 50%,#b2d0fb);border-bottom:1px solid #8fb2e6;"></div>
<span class="t" style="left:1435.03px;top:361.1px;font-size:15px;line-height:21px;color:#1e3c78;transform:scaleX(1.0332);">Gán thông tin mặc định</span>
<span class="t" style="left:1424.14px;top:400.2px;font-size:15px;line-height:21px;color:#111;transform:scaleX(1.0909);">Loại đất:</span>
<div style="left:1530.6px;top:397.3px;width:262.9000000000001px;height:26.399999999999977px;background:#fff;border:1px solid #abc1e4;"></div>
<span class="t" style="left:1533.67px;top:400.0px;font-size:15px;line-height:21px;color:#111;transform:scaleX(0.9688);">COC</span>
<svg style="left:1779.2px;top:409px;" width="8" height="4.5" viewBox="0 0 8 4.5"><path d="M0 0H8L4 4.500Z" fill="#46649e"/></svg>
<span class="t" style="left:1425.24px;top:441.9px;font-size:15px;line-height:21px;color:#111;transform:scaleX(1.0404);">Tờ bản đồ số:</span>
<div style="left:1530.6px;top:438.7px;width:262.9000000000001px;height:26.100000000000023px;background:#fff;border:1px solid #abc1e4;"></div>
<span class="t" style="left:1533.96px;top:441.3px;font-size:15px;line-height:21px;color:#111;transform:scaleX(1.0370);">1</span>
<span class="t" style="left:1424.72px;top:483.2px;font-size:15px;line-height:21px;color:#111;transform:scaleX(1.0361);">Số lẻ diện tích:</span>
<div style="left:1530.6px;top:479.7px;width:262.9000000000001px;height:26.5px;background:#fff;border:1px solid #abc1e4;"></div>
<span class="t" style="left:1533.96px;top:482.5px;font-size:15px;line-height:21px;color:#111;transform:scaleX(1.0370);">1</span>
<svg style="left:1779.2px;top:491.5px;" width="8" height="4.5" viewBox="0 0 8 4.5"><path d="M0 0H8L4 4.500Z" fill="#46649e"/></svg>
<span class="t" style="left:1436.48px;top:519.6px;font-size:15px;line-height:21px;color:#111;transform:scaleX(1.0457);">- vùng có diện tích nhỏ hơn:</span>
<div style="left:1634.8px;top:517px;width:158.70000000000005px;height:25.899999999999977px;background:#fff;border:1px solid #abc1e4;"></div>
<span class="t" style="left:1637.45px;top:519.5px;font-size:15px;line-height:21px;color:#111;transform:scaleX(1.1034);">0</span>
<div style="left:1531.7px;top:556.05px;width:16.5px;height:16.5px;background:linear-gradient(135deg,#cdd1d9,#f0f1f4 55%,#fbfbfc);border:1px solid #a8bce0;box-shadow:inset 0 0 0 2px #f7f9fd, inset 0 0 0 3px #c9cfdb;"></div>
<svg style="left:1534.7px;top:559.05px;" width="11" height="11" viewBox="0 0 11 11"><path d="M1.500 4.500L4.500 9.500L9.500 0.500" fill="none" stroke="#4566a3" stroke-width="2.400"/></svg>
<span class="t" style="left:1552.17px;top:553.8px;font-size:15px;line-height:21px;color:#111;transform:scaleX(1.0667);">Lưu thông tin của thửa đất</span>
<div style="left:1531.7px;top:585.05px;width:16.5px;height:16.5px;background:linear-gradient(135deg,#cdd1d9,#f0f1f4 55%,#fbfbfc);border:1px solid #a8bce0;box-shadow:inset 0 0 0 2px #f7f9fd, inset 0 0 0 3px #c9cfdb;"></div>
<svg style="left:1534.7px;top:588.05px;" width="11" height="11" viewBox="0 0 11 11"><path d="M1.500 4.500L4.500 9.500L9.500 0.500" fill="none" stroke="#4566a3" stroke-width="2.400"/></svg>
<span class="t" style="left:1552.70px;top:582.8px;font-size:15px;line-height:21px;color:#111;transform:scaleX(1.0624);">Chuyển thửa tách thành cũ</span>
<div style="left:1531.7px;top:613.95px;width:16.5px;height:16.5px;background:linear-gradient(135deg,#cdd1d9,#f0f1f4 55%,#fbfbfc);border:1px solid #a8bce0;box-shadow:inset 0 0 0 2px #f7f9fd, inset 0 0 0 3px #c9cfdb;"></div>
<svg style="left:1534.7px;top:616.95px;" width="11" height="11" viewBox="0 0 11 11"><path d="M1.500 4.500L4.500 9.500L9.500 0.500" fill="none" stroke="#4566a3" stroke-width="2.400"/></svg>
<span class="t" style="left:1552.20px;top:611.7px;font-size:15px;line-height:21px;color:#111;transform:scaleX(1.0428);">Lưu lại thông tin pháp lý</span>
<div style="left:1531.7px;top:642.85px;width:16.5px;height:16.5px;background:linear-gradient(135deg,#cdd1d9,#f0f1f4 55%,#fbfbfc);border:1px solid #a8bce0;box-shadow:inset 0 0 0 2px #f7f9fd, inset 0 0 0 3px #c9cfdb;"></div>
<svg style="left:1534.7px;top:645.85px;" width="11" height="11" viewBox="0 0 11 11"><path d="M1.500 4.500L4.500 9.500L9.500 0.500" fill="none" stroke="#4566a3" stroke-width="2.400"/></svg>
<span class="t" style="left:1552.22px;top:640.6px;font-size:15px;line-height:21px;color:#111;transform:scaleX(1.0265);">Lưu diện tích cũ</span>
<div style="left:1531.7px;top:671.45px;width:16.5px;height:16.5px;background:linear-gradient(135deg,#cdd1d9,#f0f1f4 55%,#fbfbfc);border:1px solid #a8bce0;box-shadow:inset 0 0 0 2px #f7f9fd, inset 0 0 0 3px #c9cfdb;"></div>
<span class="t" style="left:1552.74px;top:669.2px;font-size:15px;line-height:21px;color:#111;transform:scaleX(1.0104);">Cập nhật diện tích MDSD</span>
<div style="left:1419.3px;top:708.6px;width:381.29999999999995px;height:161.79999999999995px;background:#e4effe;border:1px solid #7da2dd;box-shadow:inset 0 0 0 1px #f4f8ff;"></div>
<div style="left:1420.3px;top:709.6px;width:379.29999999999995px;height:25.5px;background:linear-gradient(#e3eefc,#cfe1fb 50%,#b2d0fb);border-bottom:1px solid #8fb2e6;"></div>
<span class="t" style="left:1435.80px;top:712.9px;font-size:15px;line-height:21px;color:#1e3c78;transform:scaleX(1.0512);">Vẽ tâm thửa đất</span>
<span class="t" style="left:1425.05px;top:753.2px;font-size:15px;line-height:21px;color:#111;transform:scaleX(1.0786);">Lớp:</span>
<div style="left:1530.6px;top:748.5px;width:262.9000000000001px;height:26.399999999999977px;background:#fff;border:1px solid #abc1e4;"></div>
<span class="t" style="left:1532.65px;top:751.3px;font-size:15px;line-height:21px;color:#111;transform:scaleX(1.0828);">Level 11</span>
<svg style="left:1779.2px;top:760.5px;" width="8" height="4.5" viewBox="0 0 8 4.5"><path d="M0 0H8L4 4.500Z" fill="#46649e"/></svg>
<span class="t" style="left:1425.02px;top:795.5px;font-size:15px;line-height:21px;color:#111;transform:scaleX(1.1057);">Màu:</span>
<div style="left:1530.6px;top:791px;width:262.9000000000001px;height:26.5px;background:#fff;border:1px solid #abc1e4;"></div>
<div style="left:1536.2px;top:796.4px;width:18.7px;height:17.4px;background:#fff;border:1.500px solid #222;border-radius:1px;"></div>
<span class="t" style="left:1562.75px;top:793.5px;font-size:15px;line-height:21px;color:#111;transform:scaleX(1.1034);">0</span>
<svg style="left:1779.2px;top:802.5px;" width="8" height="4.5" viewBox="0 0 8 4.5"><path d="M0 0H8L4 4.500Z" fill="#46649e"/></svg>
<span class="t" style="left:1426.14px;top:836.5px;font-size:15px;line-height:21px;color:#111;transform:scaleX(1.0429);">Tỷ lệ cell:</span>
<div style="left:1530.6px;top:832.4px;width:262.9000000000001px;height:26.5px;background:#fff;border:1px solid #abc1e4;"></div>
<span class="t" style="left:1533.42px;top:835.0px;font-size:15px;line-height:21px;color:#111;transform:scaleX(1.1646);">0.1</span>
<svg style="left:1779.2px;top:844px;" width="8" height="4.5" viewBox="0 0 8 4.5"><path d="M0 0H8L4 4.500Z" fill="#46649e"/></svg>
<div style="left:1560px;top:870px;width:122px;height:28.5px;background:linear-gradient(#f6f9fe,#e3edfb 48%,#cfdff6 52%,#e0ebfa);border:1px solid #8aa6d6;border-radius:3px;"></div>
<span class="t" style="left:1582.01px;top:873.9px;font-size:15px;line-height:21px;color:#111;transform:scaleX(1.0592);">Chấp nhận</span>
<div style="left:1554.9px;top:866.3px;width:131.89999999999986px;height:34.30000000000007px;border:3.5px solid #ec1c24;"></div>
<div style="left:1693px;top:868px;width:107.6px;height:30.5px;background:linear-gradient(#f6f9fe,#e3edfb 48%,#cfdff6 52%,#e0ebfa);border:1px solid #8aa6d6;border-radius:3px;"></div>
<span class="t" style="left:1726.80px;top:873.9px;font-size:15px;line-height:21px;color:#111;transform:scaleX(1.0571);">Đóng</span>
<div style="left:1183.9px;top:500px;width:263.4px;height:236.5px;background:#fff;border:1px solid #1883d7;box-shadow:0 6px 22px rgba(0,0,0,.42), 0 0 3px rgba(0,0,0,.25);"></div>
<div style="left:1184.9px;top:668.4px;width:261.4px;height:67px;background:#f0f0f0;"></div>
<svg style="left:1417px;top:510px;" width="16" height="16" viewBox="0 0 16 16"><path d="M1 1L15 15M15 1L1 15" stroke="#111" stroke-width="1.300"/></svg>
<span class="t" style="left:1202.93px;top:571.4px;font-size:16px;line-height:22px;color:#000;transform:scaleX(1.0846);">Tạo thửa đất thành công</span>
<span class="t" style="left:1202.94px;top:591.6px;font-size:16px;line-height:22px;color:#000;transform:scaleX(1.0496);">Tổng số thửa: 33</span>
<span class="t" style="left:1202.94px;top:611.8px;font-size:16px;line-height:22px;color:#000;transform:scaleX(1.0565);">Tổng diện tích: 76775,7</span>
<div style="left:1295.3px;top:687.4px;width:121.7px;height:30.2px;background:#e1e1e1;border:2px solid #0078d7;"></div>
<span class="t" style="left:1344.22px;top:691.0px;font-size:16px;line-height:22px;color:#000;transform:scaleX(1.0337);">OK</span>
<div style="left:1291.2px;top:678.6px;width:130.5999999999999px;height:45.69999999999993px;border:3.5px solid #ec1c24;"></div>
</div></div>
<div style="left:19.5px;top:1040px;width:678.5px;height:67.5px;background:linear-gradient(#c9ad74 0.0px,#e8cb8c 2.5px,#fcd995 7.5px,#ffd98a 60%,#ffd684);border:1.500px solid #eab21c;border-radius:10.500px;"></div>
<svg style="left:41.5px;top:1049px;" width="48" height="48" viewBox="0 0 48 48"><rect x="3.500" y="3.500" width="43.500" height="43.500" fill="#b9cfe6"/><rect x="1" y="1" width="43" height="43" fill="#5b9bd5" stroke="#fff" stroke-width="2"/><path d="M9.500 23L17.200 31L35.500 11.500" fill="none" stroke="#fff" stroke-width="4.200" stroke-linejoin="miter"/><path d="M9.800 23.100L17.200 30.100L35.300 11.700" fill="none" stroke="#5b9bd5" stroke-width="0.900"/></svg>
<span class="t" style="left:95.47px;top:1052.7px;font-size:34px;line-height:40px;color:#000;transform:scaleX(0.9940);text-shadow:1px 1.500px 1.500px rgba(90,60,0,.35);">Phone và Zalo và Viber: 036.3232.739</span>
<div style="left:782px;top:1038px;width:569px;height:66.5px;background:linear-gradient(#c9ad74 0.5px,#e8cb8c 4.5px,#fcd995 9.5px,#ffd98a 60%,#ffd684);border:1.500px solid #eab21c;border-top-color:#a3956a;border-radius:10.500px;"></div>
<svg style="left:804px;top:1047px;" width="48" height="48" viewBox="0 0 48 48"><rect x="3.500" y="3.500" width="43.500" height="43.500" fill="#b9cfe6"/><rect x="1" y="1" width="43" height="43" fill="#5b9bd5" stroke="#fff" stroke-width="2"/><path d="M9.500 23L17.200 31L35.500 11.500" fill="none" stroke="#fff" stroke-width="4.200" stroke-linejoin="miter"/><path d="M9.800 23.100L17.200 30.100L35.300 11.700" fill="none" stroke="#5b9bd5" stroke-width="0.900"/></svg>
<span class="t" style="left:860.34px;top:1050.7px;font-size:34px;line-height:40px;color:#000;transform:scaleX(1.0046);text-shadow:1px 1.500px 1.500px rgba(90,60,0,.35);">datsach.net và datsach.com.vn</span>
<div style="left:1475px;top:1038px;width:497px;height:66.5px;background:linear-gradient(#c9ad74 0.5px,#e8cb8c 4.5px,#fcd995 9.5px,#ffd98a 60%,#ffd684);border:1.500px solid #eab21c;border-top-color:#a3956a;border-radius:10.500px;"></div>
<svg style="left:1497px;top:1047px;" width="48" height="48" viewBox="0 0 48 48"><rect x="3.500" y="3.500" width="43.500" height="43.500" fill="#b9cfe6"/><rect x="1" y="1" width="43" height="43" fill="#5b9bd5" stroke="#fff" stroke-width="2"/><path d="M9.500 23L17.200 31L35.500 11.500" fill="none" stroke="#fff" stroke-width="4.200" stroke-linejoin="miter"/><path d="M9.800 23.100L17.200 30.100L35.300 11.700" fill="none" stroke="#5b9bd5" stroke-width="0.900"/></svg>
<span class="t" style="left:1554.00px;top:1050.7px;font-size:34px;line-height:40px;color:#000;transform:scaleX(1.0275);text-shadow:1px 1.500px 1.500px rgba(90,60,0,.35);">youtube.com/@datsachtv</span>
</body></html>
